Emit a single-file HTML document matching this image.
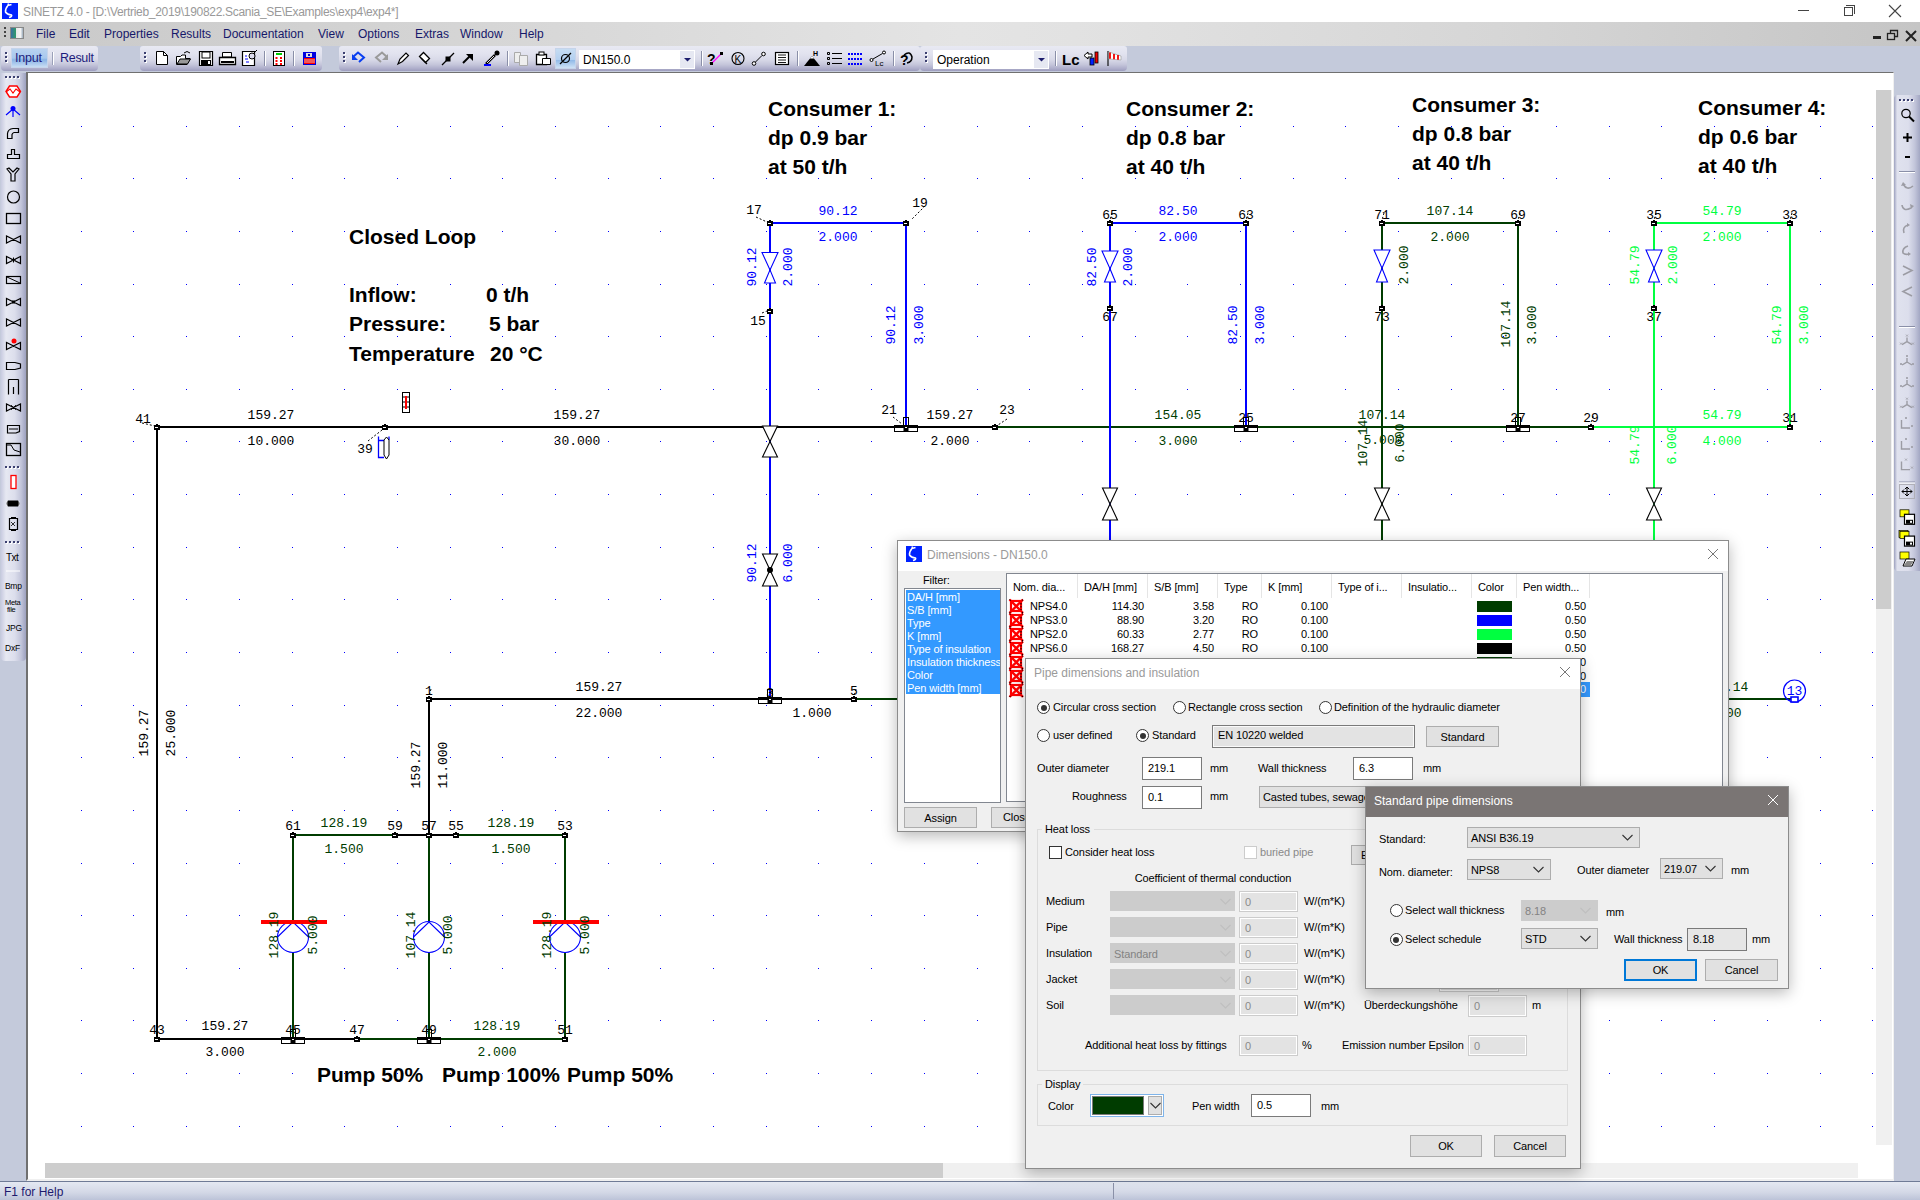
<!DOCTYPE html><html><head><meta charset="utf-8"><title>SINETZ</title><style>
*{box-sizing:border-box}
html,body{margin:0;padding:0}
body{width:1920px;height:1200px;position:relative;overflow:hidden;background:#c4cadb;font-family:"Liberation Sans",sans-serif;font-size:12px;color:#000}
.a{position:absolute}
.t{position:absolute;white-space:nowrap;line-height:1}
.mono{font-family:"Liberation Mono",monospace}

.dlg{position:absolute;background:#f0f0f0;border:1px solid #8c8c8c;box-shadow:0 4px 14px rgba(0,0,0,0.28)}
.ui{position:absolute;white-space:nowrap;font-size:11px;line-height:14px;height:14px;letter-spacing:-0.1px;color:#000}
.ttl{position:absolute;white-space:nowrap;font-size:12px;line-height:16px;height:16px}
.box{position:absolute}
</style></head><body><div class="a" style="left:0;top:0;width:1920px;height:22px;background:#fff"></div><svg class="a" style="left:2px;top:3px" width="16" height="16"><rect width="16" height="16" fill="#0022ff"/><path d="M6.5 0.5L6 2.5L9.5 1.5M6 2.5Q3 6 3.5 9Q5 11.5 9.5 12Q10.5 13.5 7 14.5" stroke="#fff" stroke-width="1.5" fill="none"/></svg><div class="t" style="left:23px;top:6px;font-size:12px;color:#999;letter-spacing:-0.3px">SINETZ 4.0 - [D:\Vertrieb_2019\190822.Scania_SE\Examples\exp4\exp4*]</div><div class="a" style="left:1798px;top:10px;width:11px;height:1px;background:#444"></div><div class="a" style="left:1844px;top:7px;width:9px;height:9px;border:1px solid #444;background:#fff"></div><div class="a" style="left:1846px;top:5px;width:9px;height:9px;border-top:1px solid #444;border-right:1px solid #444"></div><svg class="a" style="left:1888px;top:4px" width="14" height="14"><path d="M1 1L13 13M13 1L1 13" stroke="#444" stroke-width="1.1"/></svg><div class="a" style="left:0;top:22px;width:1920px;height:24px;background:linear-gradient(90deg,#c9c9c9 0%,#d4d4d4 22%,#e4e4e4 50%,#e2e2e2 56%,#d6d6d6 78%,#c5c5c5 100%)"></div><div class="t" style="left:36px;top:28px;font-size:12px;color:#16186a">File</div><div class="t" style="left:69px;top:28px;font-size:12px;color:#16186a">Edit</div><div class="t" style="left:104px;top:28px;font-size:12px;color:#16186a">Properties</div><div class="t" style="left:171px;top:28px;font-size:12px;color:#16186a">Results</div><div class="t" style="left:223px;top:28px;font-size:12px;color:#16186a">Documentation</div><div class="t" style="left:318px;top:28px;font-size:12px;color:#16186a">View</div><div class="t" style="left:358px;top:28px;font-size:12px;color:#16186a">Options</div><div class="t" style="left:415px;top:28px;font-size:12px;color:#16186a">Extras</div><div class="t" style="left:460px;top:28px;font-size:12px;color:#16186a">Window</div><div class="t" style="left:519px;top:28px;font-size:12px;color:#16186a">Help</div><div class="a" style="left:4px;top:27px;width:2px;height:2px;background:#444;box-shadow:0 4px 0 #444,0 8px 0 #444"></div><div class="a" style="left:10px;top:27px;width:14px;height:12px;border:1px solid #888;background:linear-gradient(90deg,#3a6fa0 0%,#2f9a6a 40%,#e8e8e8 45%,#f4f4f4 80%,#9ab 100%)"></div><div class="a" style="left:1873px;top:36px;width:8px;height:3px;background:#222"></div><svg class="a" style="left:1886px;top:29px" width="14" height="12"><rect x="1.5" y="4.5" width="7" height="6" fill="none" stroke="#222" stroke-width="1.3"/><path d="M4.5 4.5V1.5H11.5V7.5H8.5" fill="none" stroke="#222" stroke-width="1.3"/></svg><svg class="a" style="left:1905px;top:30px" width="12" height="12"><path d="M1 1L11 11M11 1L1 11" stroke="#222" stroke-width="2"/></svg><div class="a" style="left:0;top:46px;width:1920px;height:26px;background:#c4cadb"></div><div class="a" style="left:26px;top:72px;width:1868px;height:1109px;background:#fff;border-left:2px solid #707070;border-top:1px solid #707070;border-right:1px solid #f0f0f0;border-bottom:2px solid #f0f0f0"></div><div class="a" style="left:0;top:72px;width:26px;height:1109px;background:#c4cadb"></div><div class="a" style="left:1876px;top:90px;width:16px;height:1055px;background:#f0f0f0"></div><div class="a" style="left:1876px;top:90px;width:15px;height:519px;background:#cdcdcd"></div><div class="a" style="left:45px;top:1163px;width:898px;height:15px;background:#cdcdcd"></div><div class="a" style="left:943px;top:1163px;width:915px;height:15px;background:#f0f0f0"></div><div class="a" style="left:0;top:1181px;width:1920px;height:19px;background:linear-gradient(180deg,#6f7b96 0,#6f7b96 1px,#e4e8f2 1px,#d3d8e6 60%,#bcc3d8 100%)"></div><div class="t" style="left:4px;top:1186px;font-size:12px;color:#1e1a6e">F1 for Help</div><div class="a" style="left:1113px;top:1183px;width:1px;height:16px;background:#8a90a8"></div><div class="a" style="left:1px;top:46px;width:97px;height:25px;background:linear-gradient(180deg,#e8e9f3 0%,#e2e3ef 30%,#d8d9e8 55%,#c4c5da 75%,#aeaecb 90%,#9c9cbd 100%);border-radius:3px 3px 4px 4px"></div><div class="a" style="left:140px;top:46px;width:182px;height:25px;background:linear-gradient(180deg,#e8e9f3 0%,#e2e3ef 30%,#d8d9e8 55%,#c4c5da 75%,#aeaecb 90%,#9c9cbd 100%);border-radius:3px 3px 4px 4px"></div><div class="a" style="left:339px;top:46px;width:581px;height:25px;background:linear-gradient(180deg,#e8e9f3 0%,#e2e3ef 30%,#d8d9e8 55%,#c4c5da 75%,#aeaecb 90%,#9c9cbd 100%);border-radius:3px 3px 4px 4px"></div><div class="a" style="left:920px;top:46px;width:207px;height:25px;background:linear-gradient(180deg,#e8e9f3 0%,#e2e3ef 30%,#d8d9e8 55%,#c4c5da 75%,#aeaecb 90%,#9c9cbd 100%);border-radius:3px 3px 4px 4px"></div><div class="a" style="left:11px;top:48px;width:37px;height:20px;border:1px solid #c6d4ea;background:linear-gradient(180deg,#b8d2f0 0%,#a8c8ee 50%,#8ab4e6 60%,#c8ddf4 100%)"></div><div class="t" style="left:15px;top:52px;font-size:12.5px;color:#1c1c7c;letter-spacing:-0.2px">Input</div><div class="a" style="left:52px;top:52px;width:1px;height:13px;background:#9aa0b8;box-shadow:1px 0 0 #fff"></div><div class="t" style="left:60px;top:52px;font-size:12.5px;color:#1c1c7c;letter-spacing:-0.3px">Result</div><div class="a" style="left:555px;top:48px;width:21px;height:21px;border:1px solid #c6d4ea;background:linear-gradient(180deg,#c6dcf2 0%,#b4d0f0 55%,#92bae8 60%,#cfe2f6 100%)"></div><div class="a" style="left:579px;top:50px;width:116px;height:19px;background:#fff"></div><div class="a" style="left:680px;top:51px;width:14px;height:17px;background:#e6e8f2"></div><div class="t" style="left:583px;top:54px;font-size:12px;color:#000">DN150.0</div><div class="a" style="left:933px;top:50px;width:116px;height:19px;background:#fff"></div><div class="a" style="left:1034px;top:51px;width:14px;height:17px;background:#e6e8f2"></div><div class="t" style="left:937px;top:54px;font-size:12px;color:#000">Operation</div><svg class="a" style="left:0;top:44px" width="1140" height="30" viewBox="0 44 1140 30"><rect x="6" y="53" width="2" height="2" fill="#fff"/><rect x="5" y="52" width="2" height="2" fill="#3c4070"/><rect x="6" y="57" width="2" height="2" fill="#fff"/><rect x="5" y="56" width="2" height="2" fill="#3c4070"/><rect x="6" y="61" width="2" height="2" fill="#fff"/><rect x="5" y="60" width="2" height="2" fill="#3c4070"/><rect x="145" y="53" width="2" height="2" fill="#fff"/><rect x="144" y="52" width="2" height="2" fill="#3c4070"/><rect x="145" y="57" width="2" height="2" fill="#fff"/><rect x="144" y="56" width="2" height="2" fill="#3c4070"/><rect x="145" y="61" width="2" height="2" fill="#fff"/><rect x="144" y="60" width="2" height="2" fill="#3c4070"/><rect x="344" y="53" width="2" height="2" fill="#fff"/><rect x="343" y="52" width="2" height="2" fill="#3c4070"/><rect x="344" y="57" width="2" height="2" fill="#fff"/><rect x="343" y="56" width="2" height="2" fill="#3c4070"/><rect x="344" y="61" width="2" height="2" fill="#fff"/><rect x="343" y="60" width="2" height="2" fill="#3c4070"/><rect x="926" y="53" width="2" height="2" fill="#fff"/><rect x="925" y="52" width="2" height="2" fill="#3c4070"/><rect x="926" y="57" width="2" height="2" fill="#fff"/><rect x="925" y="56" width="2" height="2" fill="#3c4070"/><rect x="926" y="61" width="2" height="2" fill="#fff"/><rect x="925" y="60" width="2" height="2" fill="#3c4070"/><path d="M684 58h7l-3.5 3.5z" fill="#1c1c6c"/><path d="M1038 58h7l-3.5 3.5z" fill="#1c1c6c"/><rect x="264" y="51" width="1" height="15" fill="#8a8fa8"/><rect x="265" y="51" width="1" height="15" fill="#fff"/><rect x="293" y="51" width="1" height="15" fill="#8a8fa8"/><rect x="294" y="51" width="1" height="15" fill="#fff"/><rect x="507" y="51" width="1" height="15" fill="#8a8fa8"/><rect x="508" y="51" width="1" height="15" fill="#fff"/><rect x="701" y="51" width="1" height="15" fill="#8a8fa8"/><rect x="702" y="51" width="1" height="15" fill="#fff"/><rect x="797" y="51" width="1" height="15" fill="#8a8fa8"/><rect x="798" y="51" width="1" height="15" fill="#fff"/><rect x="893" y="51" width="1" height="15" fill="#8a8fa8"/><rect x="894" y="51" width="1" height="15" fill="#fff"/><rect x="1055" y="51" width="1" height="15" fill="#8a8fa8"/><rect x="1056" y="51" width="1" height="15" fill="#fff"/><path d="M156.5 51.5H163.5L167.5 55.5V64.5H156.5Z" fill="#fff" stroke="#000"/><path d="M163.5 51.5V55.5H167.5" fill="none" stroke="#000"/><path d="M176.5 56.5H180.5L182 55H185.5V58.5H190L187 64.5H176.5Z" fill="#fff" stroke="#000"/><path d="M177 64L180 59H190.5L187.5 64Z" fill="#999" stroke="#000"/><path d="M184 53Q187 50 190 53" fill="none" stroke="#000"/><path d="M199.5 51.5H212.5V65.5H199.5Z" fill="#fff" stroke="#000" stroke-width="1.2"/><rect x="202" y="52" width="8" height="6" fill="#fff" stroke="#000"/><rect x="201" y="60" width="10" height="5" fill="#000"/><rect x="208" y="61" width="2" height="3" fill="#fff"/><path d="M222.5 52.5H231.5V57H222.5Z" fill="#fff" stroke="#000"/><path d="M219.5 57.5H235.5V64.5H219.5Z" fill="#fff" stroke="#000" stroke-width="1.3"/><rect x="221" y="61" width="13" height="2" fill="#000"/><path d="M242.5 51.5H254.5V65.5H242.5Z" fill="#fff" stroke="#000" stroke-width="1.2"/><path d="M245 56h2M245 59h3M246 62h3" stroke="#00f"/><circle cx="252" cy="56" r="3" fill="#dde" stroke="#000"/><path d="M254 53l3-3" stroke="#000"/><rect x="273.5" y="51.5" width="11" height="14" fill="#fff" stroke="#000"/><rect x="276" y="53" width="6" height="2" fill="#0c0"/><rect x="275.5" y="57" width="2" height="2" fill="#f00"/><rect x="280" y="57" width="2" height="2" fill="#f00"/><rect x="275.5" y="60" width="2" height="2" fill="#f00"/><rect x="280" y="60" width="2" height="2" fill="#f00"/><rect x="275.5" y="63" width="2" height="2" fill="#f00"/><rect x="280" y="63" width="2" height="2" fill="#f00"/><rect x="303" y="52" width="13" height="13" fill="#0000e0"/><rect x="306" y="53" width="6" height="4" fill="#ddd"/><rect x="308" y="54" width="2" height="2" fill="#00c"/><rect x="304" y="58" width="11" height="6" fill="#f00"/><path d="M304 60h11M304 62h11" stroke="#ddd" stroke-width="0.8"/><path d="M353 57L358 52.5L364 57.5L359 62" fill="none" stroke="#0a3ff0" stroke-width="2"/><path d="M352 54V60H358Z" fill="#0a3ff0"/><path d="M387 57L382 52.5L376 57.5L381 62" fill="none" stroke="#9a9a9a" stroke-width="2"/><path d="M388 54V60H382Z" fill="#9a9a9a"/><path d="M398 64L400 59L406 53L408.5 55.5L402.5 61.5Z" fill="#fff" stroke="#000" stroke-width="1.2"/><path d="M419.5 56.5L423.5 52.5L429.5 58.5L425.5 62.5Z" fill="#fff" stroke="#000" stroke-width="1.3"/><path d="M421 58L427 64" stroke="#000" stroke-width="1.2"/><path d="M442 65L454 53" stroke="#000" stroke-width="1.2"/><rect x="445.5" y="56.5" width="5" height="5" fill="#000"/><path d="M463 63L471 55" stroke="#000" stroke-width="2"/><path d="M466 54H473V61Z" fill="#000"/><path d="M486 64L495 55" stroke="#000" stroke-width="2.5"/><path d="M487 63L494 56" stroke="#fff" stroke-width="0.9"/><circle cx="497" cy="53" r="2.5" fill="#000"/><path d="M484 65H491" stroke="#00f" stroke-width="2"/><path d="M514.5 52.5H520.5V62.5H514.5Z" fill="#eee" stroke="#aaa"/><path d="M519.5 55.5H527.5V65.5H519.5Z" fill="#eee" stroke="#aaa"/><path d="M536.5 54.5H546.5V64.5H536.5Z" fill="#fff" stroke="#000" stroke-width="1.3"/><rect x="539" y="52" width="5" height="3" fill="#fff" stroke="#000"/><path d="M542.5 58.5H550.5V64.5H542.5Z" fill="#fff" stroke="#000"/><circle cx="565.5" cy="58.5" r="4" fill="none" stroke="#000" stroke-width="1.2"/><path d="M560 64L571 53" stroke="#000" stroke-width="1.2"/><text x="707" y="64" font-size="14" font-weight="bold" font-family="Liberation Sans" fill="#000">?</text><path d="M712 63L722 53" stroke="#f0f" stroke-width="1.3"/><rect x="720" y="52" width="3" height="3" fill="#000"/><rect x="710" y="62" width="3" height="3" fill="#000"/><circle cx="738" cy="58.5" r="6" fill="none" stroke="#000" stroke-width="1.1"/><text x="734.5" y="62.5" font-size="10" font-family="Liberation Sans" fill="#000">K</text><circle cx="754" cy="63.5" r="1.8" fill="#fff" stroke="#000"/><circle cx="763.5" cy="54" r="1.8" fill="#fff" stroke="#000"/><path d="M755.5 62L762 55.5" stroke="#000"/><rect x="775.5" y="52.5" width="13" height="12" fill="#fff" stroke="#000" stroke-width="1.2"/><path d="M778 55h8M778 57.5h8M778 60h8M778 62.5h8" stroke="#000" stroke-width="0.9"/><path d="M804 66L812 56L820 66Z" fill="#000"/><path d="M810 58.5L812 56L814 58.5Z" fill="#fff"/><text x="813" y="56" font-size="7" font-weight="bold" font-family="Liberation Sans" fill="#000">H</text><path d="M827.5 52.5h2v2h-2zM827.5 57.5h2v2h-2zM827.5 62.5h2v2h-2z" fill="none" stroke="#000"/><path d="M832 53.5h10M832 58.5h10M832 63.5h10" stroke="#000" stroke-width="1.2"/><rect x="848" y="53" width="2" height="2" fill="#0000ff"/><rect x="851" y="53" width="2" height="2" fill="#0000ff"/><rect x="854" y="53" width="2" height="2" fill="#0000ff"/><rect x="857" y="53" width="2" height="2" fill="#0000ff"/><rect x="860" y="53" width="2" height="2" fill="#0000ff"/><rect x="848" y="58" width="2" height="2" fill="#0000ff"/><rect x="851" y="58" width="2" height="2" fill="#0000ff"/><rect x="854" y="58" width="2" height="2" fill="#0000ff"/><rect x="857" y="58" width="2" height="2" fill="#0000ff"/><rect x="860" y="58" width="2" height="2" fill="#0000ff"/><rect x="848" y="63" width="2" height="2" fill="#0000ff"/><rect x="851" y="63" width="2" height="2" fill="#0000ff"/><rect x="854" y="63" width="2" height="2" fill="#0000ff"/><rect x="857" y="63" width="2" height="2" fill="#0000ff"/><rect x="860" y="63" width="2" height="2" fill="#0000ff"/><circle cx="871.5" cy="60" r="1.5" fill="#fff" stroke="#000"/><circle cx="884" cy="52.5" r="1.5" fill="#fff" stroke="#000"/><path d="M873 59L882.5 53.5" stroke="#000"/><text x="875" y="66" font-size="8" font-family="Liberation Sans" fill="#000">Lc</text><text x="900" y="65" font-size="14" font-weight="bold" font-family="Liberation Sans" fill="#000">?</text><path d="M904 55Q910 50 912 57Q912 62 907 63" fill="none" stroke="#000" stroke-width="1.5"/><text x="1062" y="64.5" font-size="15" font-weight="bold" font-family="Liberation Sans" fill="#000">Lc</text><path d="M1084 55.5L1088 52V54H1092V57H1088V59Z" fill="#fff" stroke="#000"/><rect x="1090" y="58" width="4" height="7" fill="#0020ff" stroke="#000" stroke-width="0.8"/><rect x="1095" y="52" width="3" height="11" fill="#e00" stroke="#000" stroke-width="0.8"/><path d="M1108 51V66" stroke="#000" stroke-width="1.1"/><path d="M1109 52L1121 56V60L1109 59Z" fill="#fff" stroke="#aaa" stroke-width="0.8"/><path d="M1110 52.5V58.8M1114 54V59.3M1118 55V59.7" stroke="#e00" stroke-width="1.8"/></svg><div class="a" style="left:1px;top:73px;width:25px;height:588px;background:linear-gradient(90deg,#c8cbe0 0%,#e6e8f2 20%,#dcdeec 55%,#c2c5da 80%,#9da1bf 100%);border-radius:0 0 4px 4px"></div><svg class="a" style="left:0;top:70px" width="28" height="600" viewBox="0 70 28 600"><rect x="6" y="77" width="2" height="2" fill="#fff"/><rect x="5" y="76" width="2" height="2" fill="#3c4070"/><rect x="6" y="467" width="2" height="2" fill="#fff"/><rect x="5" y="466" width="2" height="2" fill="#3c4070"/><rect x="6" y="542" width="2" height="2" fill="#fff"/><rect x="5" y="541" width="2" height="2" fill="#3c4070"/><rect x="10" y="77" width="2" height="2" fill="#fff"/><rect x="9" y="76" width="2" height="2" fill="#3c4070"/><rect x="10" y="467" width="2" height="2" fill="#fff"/><rect x="9" y="466" width="2" height="2" fill="#3c4070"/><rect x="10" y="542" width="2" height="2" fill="#fff"/><rect x="9" y="541" width="2" height="2" fill="#3c4070"/><rect x="14" y="77" width="2" height="2" fill="#fff"/><rect x="13" y="76" width="2" height="2" fill="#3c4070"/><rect x="14" y="467" width="2" height="2" fill="#fff"/><rect x="13" y="466" width="2" height="2" fill="#3c4070"/><rect x="14" y="542" width="2" height="2" fill="#fff"/><rect x="13" y="541" width="2" height="2" fill="#3c4070"/><rect x="18" y="77" width="2" height="2" fill="#fff"/><rect x="17" y="76" width="2" height="2" fill="#3c4070"/><rect x="18" y="467" width="2" height="2" fill="#fff"/><rect x="17" y="466" width="2" height="2" fill="#3c4070"/><rect x="18" y="542" width="2" height="2" fill="#fff"/><rect x="17" y="541" width="2" height="2" fill="#3c4070"/><path d="M6 91.5L9.5 86H17L20.5 91.5L17 97H9.5Z" fill="#fff" stroke="#f00" stroke-width="1.4"/><path d="M6 92L10 89L13 93L16 89L20 92" fill="none" stroke="#f00" stroke-width="1.1"/><circle cx="13" cy="108.5" r="2.5" fill="#0000ff"/><path d="M13 109V117M13 109L6 115M13 109L20 115" stroke="#0000ff" stroke-width="1.2"/><path d="M7.5 138.5V133.5Q8 129 13 128.5H18.5V132.5H14Q12.5 133 12 134.5V138.5Z" fill="none" stroke="#000" stroke-width="1.2"/><path d="M7.5 158.5V154.5H11.5V149.5H14.5V154.5H19.5V158.5Z" fill="none" stroke="#000" stroke-width="1.2"/><path d="M11 181V174L7 169L9 168L13 172L17 168L19 169L15 174V181Z" fill="none" stroke="#000" stroke-width="1.2"/><circle cx="13.5" cy="197" r="6" fill="none" stroke="#000" stroke-width="1.2"/><rect x="6.5" y="213.5" width="14" height="10" fill="none" stroke="#000" stroke-width="1.3"/><path d="M6.5 236.0V243.0L13.5 239.5ZM20.5 236.0V243.0L13.5 239.5Z" fill="none" stroke="#000" stroke-width="1.2"/><path d="M6.5 256.5V263.5L13.5 260ZM20.5 256.5V263.5L13.5 260Z" fill="none" stroke="#000" stroke-width="1.2"/><path d="M11 260h5M13.5 257.5v5" stroke="#000"/><rect x="6.5" y="276.5" width="14" height="7" fill="none" stroke="#000" stroke-width="1.2"/><path d="M7 277L20 283" stroke="#000"/><path d="M6.5 298.5V305.5L13.5 302ZM20.5 298.5V305.5L13.5 302Z" fill="none" stroke="#000" stroke-width="1.2"/><rect x="12" y="300.5" width="3" height="3" fill="#000"/><path d="M6.5 319.0V326.0L13.5 322.5ZM20.5 319.0V326.0L13.5 322.5Z" fill="none" stroke="#000" stroke-width="1.2"/><path d="M6.5 342.5V349.5L13.5 346ZM20.5 342.5V349.5L13.5 346Z" fill="none" stroke="#000" stroke-width="1.2"/><circle cx="14" cy="341" r="2.5" fill="#f00"/><path d="M6.5 362.5H15L20.5 364V368L15 369.5H6.5Z" fill="none" stroke="#000" stroke-width="1.2"/><path d="M8.5 379.5V394.5M18.5 379.5V394.5M8.5 379.5H18.5M13.5 387V394" fill="none" stroke="#000" stroke-width="1.2"/><path d="M6.5 404.0V411.0L13.5 407.5ZM20.5 404.0V411.0L13.5 407.5Z" fill="none" stroke="#000" stroke-width="1.2"/><path d="M11 405l5 5M16 405l-5 5" stroke="#000" stroke-width="0.8"/><path d="M7.5 425.5H19.5V431.5L16 433H7.5Z" fill="none" stroke="#000" stroke-width="1.2"/><path d="M9 429h9" stroke="#000"/><rect x="6.5" y="443.5" width="14" height="12" fill="none" stroke="#000" stroke-width="1.3"/><path d="M7 445L11 445L14 450L20 452" fill="none" stroke="#000"/><rect x="11" y="475.5" width="5" height="13" fill="#fff" stroke="#f00" stroke-width="1.3"/><path d="M8 500.5H18Q21 503.5 18 506.5H8Q5 503.5 8 500.5Z" fill="#000"/><path d="M7 501V506M19 501V506" stroke="#fff" stroke-width="0.6"/><path d="M9.5 518.5H17.5V529.5H9.5Z" fill="none" stroke="#000" stroke-width="1.2"/><path d="M11 522L15 526M15 522L11 526" stroke="#000" stroke-width="0.8"/><path d="M11 517.5H16M11 530.5H16" stroke="#000"/><text x="6" y="560.5" font-size="10" font-family="Liberation Sans" fill="#000" letter-spacing="-0.5">Txt</text><path d="M6 571h14" stroke="#fff" stroke-width="1"/><text x="5" y="589" font-size="8.5" font-family="Liberation Sans" fill="#000" letter-spacing="-0.3">Bmp</text><text x="5" y="605" font-size="7.5" font-family="Liberation Sans" fill="#000" letter-spacing="-0.3">Meta</text><text x="7" y="611.5" font-size="7.5" font-family="Liberation Sans" fill="#000" letter-spacing="-0.3">file</text><text x="6" y="631" font-size="8.5" font-family="Liberation Sans" fill="#000" letter-spacing="-0.2">JPG</text><text x="5" y="651" font-size="8.5" font-family="Liberation Sans" fill="#000" letter-spacing="-0.2">DxF</text></svg><div class="a" style="left:1894px;top:95px;width:26px;height:476px;background:linear-gradient(90deg,#9da1bf 0%,#e0e2ee 12%,#dcdeec 55%,#c2c5da 80%,#a3a7c3 100%);border-radius:4px 0 0 4px"></div><svg class="a" style="left:1890px;top:90px" width="30" height="480" viewBox="1890 90 30 480"><rect x="1900" y="100" width="2" height="2" fill="#fff"/><rect x="1899" y="99" width="2" height="2" fill="#3c4070"/><rect x="1904" y="100" width="2" height="2" fill="#fff"/><rect x="1903" y="99" width="2" height="2" fill="#3c4070"/><rect x="1908" y="100" width="2" height="2" fill="#fff"/><rect x="1907" y="99" width="2" height="2" fill="#3c4070"/><rect x="1912" y="100" width="2" height="2" fill="#fff"/><rect x="1911" y="99" width="2" height="2" fill="#3c4070"/><circle cx="1906" cy="113.5" r="4.2" fill="#dde" stroke="#000" stroke-width="1.2"/><path d="M1909 116.5L1914 121.5" stroke="#000" stroke-width="2"/><path d="M1903 137.5h9M1907.5 133v9" stroke="#000" stroke-width="2"/><path d="M1905 157h5" stroke="#000" stroke-width="2"/><path d="M1899 171.5h16" stroke="#8a8fa8"/><path d="M1899 172.5h16" stroke="#fff"/><path d="M1899 326.5h16" stroke="#8a8fa8"/><path d="M1899 327.5h16" stroke="#fff"/><path d="M1899 482h16" stroke="#8a8fa8"/><path d="M1899 483h16" stroke="#fff"/><path d="M1903 184Q1907 191 1913 186" fill="none" stroke="#9c9ca4" stroke-width="1.6"/><path d="M1901 186l2-4 3 3z" fill="#9c9ca4"/><path d="M1902 205Q1903 212 1911 208" fill="none" stroke="#9c9ca4" stroke-width="1.6"/><path d="M1910 204l4 2-3 3z" fill="#9c9ca4"/><path d="M1908 225Q1902 227 1904 233" fill="none" stroke="#9c9ca4" stroke-width="1.6"/><path d="M1907 223l3 2-3 2z" fill="#9c9ca4"/><path d="M1908 246Q1902 248 1903 253Q1905 255 1909 254" fill="none" stroke="#9c9ca4" stroke-width="1.6"/><path d="M1908 252l3 2-3 2z" fill="#9c9ca4"/><path d="M1903 266L1912 270.5L1903 275" fill="none" stroke="#9c9ca4" stroke-width="1.6"/><path d="M1912 287L1903 291.5L1912 296" fill="none" stroke="#9c9ca4" stroke-width="1.6"/><path d="M1907 337.6V341.6L1902 344.6M1907 341.6L1912 344.6" fill="none" stroke="#9c9ca4" stroke-width="1.4"/><path d="M1906 334.6l2 2M1908 334.6l-2 2M1900 342.6l2 2M1902 342.6l-2 2M1912 342.6l2 2M1914 342.6l-2 2" stroke="#9c9ca4" stroke-width="0.8"/><path d="M1907 358V362L1902 365M1907 362L1912 365" fill="none" stroke="#9c9ca4" stroke-width="1.4"/><path d="M1906 355l2 2M1908 355l-2 2M1900 363l2 2M1902 363l-2 2M1912 363l2 2M1914 363l-2 2" stroke="#9c9ca4" stroke-width="0.8"/><path d="M1907 380V384L1902 387M1907 384L1912 387" fill="none" stroke="#9c9ca4" stroke-width="1.4"/><path d="M1906 377l2 2M1908 377l-2 2M1900 385l2 2M1902 385l-2 2M1912 385l2 2M1914 385l-2 2" stroke="#9c9ca4" stroke-width="0.8"/><path d="M1907 400.7V404.7L1902 407.7M1907 404.7L1912 407.7" fill="none" stroke="#9c9ca4" stroke-width="1.4"/><path d="M1906 397.7l2 2M1908 397.7l-2 2M1900 405.7l2 2M1902 405.7l-2 2M1912 405.7l2 2M1914 405.7l-2 2" stroke="#9c9ca4" stroke-width="0.8"/><path d="M1901.5 420V428H1910" fill="none" stroke="#9c9ca4" stroke-width="1.4"/><path d="M1905 417l2 2M1907 417l-2 2M1911 425l2 2M1913 425l-2 2" stroke="#9c9ca4" stroke-width="0.8"/><path d="M1901.5 441V449H1910" fill="none" stroke="#9c9ca4" stroke-width="1.4"/><path d="M1905 438l2 2M1907 438l-2 2M1911 446l2 2M1913 446l-2 2" stroke="#9c9ca4" stroke-width="0.8"/><path d="M1901.5 461.6V469.6H1910" fill="none" stroke="#9c9ca4" stroke-width="1.4"/><path d="M1905 458.6l2 2M1907 458.6l-2 2M1911 466.6l2 2M1913 466.6l-2 2" stroke="#9c9ca4" stroke-width="0.8"/><rect x="1899.5" y="484.5" width="15" height="14" fill="none" stroke="#b0b0b8"/><path d="M1907 487V496M1902 491.5H1912" stroke="#000" stroke-width="1"/><path d="M1905 489l2-2 2 2M1905 494l2 2 2-2M1904 489.5l-2 2 2 2M1910 489.5l2 2-2 2" fill="none" stroke="#000" stroke-width="1"/><rect x="1900" y="509.79999999999995" width="9" height="7" fill="#ff0" stroke="#000" stroke-width="0.7"/><rect x="1904.5" y="514.3" width="10" height="10" fill="#fff" stroke="#000" stroke-width="1.2"/><rect x="1906" y="519.8" width="7" height="4" fill="#000"/><rect x="1910" y="520.8" width="2" height="2" fill="#fff"/><rect x="1899" y="530.6" width="9" height="7" fill="#ff0" stroke="#000" stroke-width="0.7"/><rect x="1900" y="531.6" width="9" height="7" fill="#ff0" stroke="#000" stroke-width="0.7"/><rect x="1904.5" y="536.1" width="10" height="10" fill="#fff" stroke="#000" stroke-width="1.2"/><rect x="1906" y="541.6" width="7" height="4" fill="#000"/><rect x="1910" y="542.6" width="2" height="2" fill="#fff"/><rect x="1900" y="552" width="9" height="7" fill="#ff0" stroke="#000" stroke-width="0.7"/><path d="M1903 566L1906 559H1915L1912 566Z" fill="#fff" stroke="#000" stroke-width="1"/><path d="M1904 565L1907 561H1914L1911 565Z" fill="#888"/></svg><svg class="a" style="left:0;top:0" width="1920" height="1200" viewBox="0 0 1920 1200"><defs><clipPath id="cv"><rect x="28" y="73" width="1848" height="1090"/></clipPath></defs><g clip-path="url(#cv)"><path d="M81 126h1v1h-1zM133 126h1v1h-1zM186 126h1v1h-1zM239 126h1v1h-1zM292 126h1v1h-1zM344 126h1v1h-1zM397 126h1v1h-1zM450 126h1v1h-1zM502 126h1v1h-1zM555 126h1v1h-1zM608 126h1v1h-1zM660 126h1v1h-1zM713 126h1v1h-1zM766 126h1v1h-1zM818 126h1v1h-1zM871 126h1v1h-1zM924 126h1v1h-1zM977 126h1v1h-1zM1029 126h1v1h-1zM1082 126h1v1h-1zM1135 126h1v1h-1zM1187 126h1v1h-1zM1240 126h1v1h-1zM1293 126h1v1h-1zM1345 126h1v1h-1zM1398 126h1v1h-1zM1451 126h1v1h-1zM1503 126h1v1h-1zM1556 126h1v1h-1zM1609 126h1v1h-1zM1661 126h1v1h-1zM1714 126h1v1h-1zM1767 126h1v1h-1zM1820 126h1v1h-1zM1872 126h1v1h-1zM81 178h1v1h-1zM133 178h1v1h-1zM186 178h1v1h-1zM239 178h1v1h-1zM292 178h1v1h-1zM344 178h1v1h-1zM397 178h1v1h-1zM450 178h1v1h-1zM502 178h1v1h-1zM555 178h1v1h-1zM608 178h1v1h-1zM660 178h1v1h-1zM713 178h1v1h-1zM766 178h1v1h-1zM818 178h1v1h-1zM871 178h1v1h-1zM924 178h1v1h-1zM977 178h1v1h-1zM1029 178h1v1h-1zM1082 178h1v1h-1zM1135 178h1v1h-1zM1187 178h1v1h-1zM1240 178h1v1h-1zM1293 178h1v1h-1zM1345 178h1v1h-1zM1398 178h1v1h-1zM1451 178h1v1h-1zM1503 178h1v1h-1zM1556 178h1v1h-1zM1609 178h1v1h-1zM1661 178h1v1h-1zM1714 178h1v1h-1zM1767 178h1v1h-1zM1820 178h1v1h-1zM1872 178h1v1h-1zM81 231h1v1h-1zM133 231h1v1h-1zM186 231h1v1h-1zM239 231h1v1h-1zM292 231h1v1h-1zM344 231h1v1h-1zM397 231h1v1h-1zM450 231h1v1h-1zM502 231h1v1h-1zM555 231h1v1h-1zM608 231h1v1h-1zM660 231h1v1h-1zM713 231h1v1h-1zM766 231h1v1h-1zM818 231h1v1h-1zM871 231h1v1h-1zM924 231h1v1h-1zM977 231h1v1h-1zM1029 231h1v1h-1zM1082 231h1v1h-1zM1135 231h1v1h-1zM1187 231h1v1h-1zM1240 231h1v1h-1zM1293 231h1v1h-1zM1345 231h1v1h-1zM1398 231h1v1h-1zM1451 231h1v1h-1zM1503 231h1v1h-1zM1556 231h1v1h-1zM1609 231h1v1h-1zM1661 231h1v1h-1zM1714 231h1v1h-1zM1767 231h1v1h-1zM1820 231h1v1h-1zM1872 231h1v1h-1zM81 284h1v1h-1zM133 284h1v1h-1zM186 284h1v1h-1zM239 284h1v1h-1zM292 284h1v1h-1zM344 284h1v1h-1zM397 284h1v1h-1zM450 284h1v1h-1zM502 284h1v1h-1zM555 284h1v1h-1zM608 284h1v1h-1zM660 284h1v1h-1zM713 284h1v1h-1zM766 284h1v1h-1zM818 284h1v1h-1zM871 284h1v1h-1zM924 284h1v1h-1zM977 284h1v1h-1zM1029 284h1v1h-1zM1082 284h1v1h-1zM1135 284h1v1h-1zM1187 284h1v1h-1zM1240 284h1v1h-1zM1293 284h1v1h-1zM1345 284h1v1h-1zM1398 284h1v1h-1zM1451 284h1v1h-1zM1503 284h1v1h-1zM1556 284h1v1h-1zM1609 284h1v1h-1zM1661 284h1v1h-1zM1714 284h1v1h-1zM1767 284h1v1h-1zM1820 284h1v1h-1zM1872 284h1v1h-1zM81 336h1v1h-1zM133 336h1v1h-1zM186 336h1v1h-1zM239 336h1v1h-1zM292 336h1v1h-1zM344 336h1v1h-1zM397 336h1v1h-1zM450 336h1v1h-1zM502 336h1v1h-1zM555 336h1v1h-1zM608 336h1v1h-1zM660 336h1v1h-1zM713 336h1v1h-1zM766 336h1v1h-1zM818 336h1v1h-1zM871 336h1v1h-1zM924 336h1v1h-1zM977 336h1v1h-1zM1029 336h1v1h-1zM1082 336h1v1h-1zM1135 336h1v1h-1zM1187 336h1v1h-1zM1240 336h1v1h-1zM1293 336h1v1h-1zM1345 336h1v1h-1zM1398 336h1v1h-1zM1451 336h1v1h-1zM1503 336h1v1h-1zM1556 336h1v1h-1zM1609 336h1v1h-1zM1661 336h1v1h-1zM1714 336h1v1h-1zM1767 336h1v1h-1zM1820 336h1v1h-1zM1872 336h1v1h-1zM81 389h1v1h-1zM133 389h1v1h-1zM186 389h1v1h-1zM239 389h1v1h-1zM292 389h1v1h-1zM344 389h1v1h-1zM397 389h1v1h-1zM450 389h1v1h-1zM502 389h1v1h-1zM555 389h1v1h-1zM608 389h1v1h-1zM660 389h1v1h-1zM713 389h1v1h-1zM766 389h1v1h-1zM818 389h1v1h-1zM871 389h1v1h-1zM924 389h1v1h-1zM977 389h1v1h-1zM1029 389h1v1h-1zM1082 389h1v1h-1zM1135 389h1v1h-1zM1187 389h1v1h-1zM1240 389h1v1h-1zM1293 389h1v1h-1zM1345 389h1v1h-1zM1398 389h1v1h-1zM1451 389h1v1h-1zM1503 389h1v1h-1zM1556 389h1v1h-1zM1609 389h1v1h-1zM1661 389h1v1h-1zM1714 389h1v1h-1zM1767 389h1v1h-1zM1820 389h1v1h-1zM1872 389h1v1h-1zM81 441h1v1h-1zM133 441h1v1h-1zM186 441h1v1h-1zM239 441h1v1h-1zM292 441h1v1h-1zM344 441h1v1h-1zM397 441h1v1h-1zM450 441h1v1h-1zM502 441h1v1h-1zM555 441h1v1h-1zM608 441h1v1h-1zM660 441h1v1h-1zM713 441h1v1h-1zM766 441h1v1h-1zM818 441h1v1h-1zM871 441h1v1h-1zM924 441h1v1h-1zM977 441h1v1h-1zM1029 441h1v1h-1zM1082 441h1v1h-1zM1135 441h1v1h-1zM1187 441h1v1h-1zM1240 441h1v1h-1zM1293 441h1v1h-1zM1345 441h1v1h-1zM1398 441h1v1h-1zM1451 441h1v1h-1zM1503 441h1v1h-1zM1556 441h1v1h-1zM1609 441h1v1h-1zM1661 441h1v1h-1zM1714 441h1v1h-1zM1767 441h1v1h-1zM1820 441h1v1h-1zM1872 441h1v1h-1zM81 494h1v1h-1zM133 494h1v1h-1zM186 494h1v1h-1zM239 494h1v1h-1zM292 494h1v1h-1zM344 494h1v1h-1zM397 494h1v1h-1zM450 494h1v1h-1zM502 494h1v1h-1zM555 494h1v1h-1zM608 494h1v1h-1zM660 494h1v1h-1zM713 494h1v1h-1zM766 494h1v1h-1zM818 494h1v1h-1zM871 494h1v1h-1zM924 494h1v1h-1zM977 494h1v1h-1zM1029 494h1v1h-1zM1082 494h1v1h-1zM1135 494h1v1h-1zM1187 494h1v1h-1zM1240 494h1v1h-1zM1293 494h1v1h-1zM1345 494h1v1h-1zM1398 494h1v1h-1zM1451 494h1v1h-1zM1503 494h1v1h-1zM1556 494h1v1h-1zM1609 494h1v1h-1zM1661 494h1v1h-1zM1714 494h1v1h-1zM1767 494h1v1h-1zM1820 494h1v1h-1zM1872 494h1v1h-1zM81 547h1v1h-1zM133 547h1v1h-1zM186 547h1v1h-1zM239 547h1v1h-1zM292 547h1v1h-1zM344 547h1v1h-1zM397 547h1v1h-1zM450 547h1v1h-1zM502 547h1v1h-1zM555 547h1v1h-1zM608 547h1v1h-1zM660 547h1v1h-1zM713 547h1v1h-1zM766 547h1v1h-1zM818 547h1v1h-1zM871 547h1v1h-1zM924 547h1v1h-1zM977 547h1v1h-1zM1029 547h1v1h-1zM1082 547h1v1h-1zM1135 547h1v1h-1zM1187 547h1v1h-1zM1240 547h1v1h-1zM1293 547h1v1h-1zM1345 547h1v1h-1zM1398 547h1v1h-1zM1451 547h1v1h-1zM1503 547h1v1h-1zM1556 547h1v1h-1zM1609 547h1v1h-1zM1661 547h1v1h-1zM1714 547h1v1h-1zM1767 547h1v1h-1zM1820 547h1v1h-1zM1872 547h1v1h-1zM81 599h1v1h-1zM133 599h1v1h-1zM186 599h1v1h-1zM239 599h1v1h-1zM292 599h1v1h-1zM344 599h1v1h-1zM397 599h1v1h-1zM450 599h1v1h-1zM502 599h1v1h-1zM555 599h1v1h-1zM608 599h1v1h-1zM660 599h1v1h-1zM713 599h1v1h-1zM766 599h1v1h-1zM818 599h1v1h-1zM871 599h1v1h-1zM924 599h1v1h-1zM977 599h1v1h-1zM1029 599h1v1h-1zM1082 599h1v1h-1zM1135 599h1v1h-1zM1187 599h1v1h-1zM1240 599h1v1h-1zM1293 599h1v1h-1zM1345 599h1v1h-1zM1398 599h1v1h-1zM1451 599h1v1h-1zM1503 599h1v1h-1zM1556 599h1v1h-1zM1609 599h1v1h-1zM1661 599h1v1h-1zM1714 599h1v1h-1zM1767 599h1v1h-1zM1820 599h1v1h-1zM1872 599h1v1h-1zM81 652h1v1h-1zM133 652h1v1h-1zM186 652h1v1h-1zM239 652h1v1h-1zM292 652h1v1h-1zM344 652h1v1h-1zM397 652h1v1h-1zM450 652h1v1h-1zM502 652h1v1h-1zM555 652h1v1h-1zM608 652h1v1h-1zM660 652h1v1h-1zM713 652h1v1h-1zM766 652h1v1h-1zM818 652h1v1h-1zM871 652h1v1h-1zM924 652h1v1h-1zM977 652h1v1h-1zM1029 652h1v1h-1zM1082 652h1v1h-1zM1135 652h1v1h-1zM1187 652h1v1h-1zM1240 652h1v1h-1zM1293 652h1v1h-1zM1345 652h1v1h-1zM1398 652h1v1h-1zM1451 652h1v1h-1zM1503 652h1v1h-1zM1556 652h1v1h-1zM1609 652h1v1h-1zM1661 652h1v1h-1zM1714 652h1v1h-1zM1767 652h1v1h-1zM1820 652h1v1h-1zM1872 652h1v1h-1zM81 705h1v1h-1zM133 705h1v1h-1zM186 705h1v1h-1zM239 705h1v1h-1zM292 705h1v1h-1zM344 705h1v1h-1zM397 705h1v1h-1zM450 705h1v1h-1zM502 705h1v1h-1zM555 705h1v1h-1zM608 705h1v1h-1zM660 705h1v1h-1zM713 705h1v1h-1zM766 705h1v1h-1zM818 705h1v1h-1zM871 705h1v1h-1zM924 705h1v1h-1zM977 705h1v1h-1zM1029 705h1v1h-1zM1082 705h1v1h-1zM1135 705h1v1h-1zM1187 705h1v1h-1zM1240 705h1v1h-1zM1293 705h1v1h-1zM1345 705h1v1h-1zM1398 705h1v1h-1zM1451 705h1v1h-1zM1503 705h1v1h-1zM1556 705h1v1h-1zM1609 705h1v1h-1zM1661 705h1v1h-1zM1714 705h1v1h-1zM1767 705h1v1h-1zM1820 705h1v1h-1zM1872 705h1v1h-1zM81 757h1v1h-1zM133 757h1v1h-1zM186 757h1v1h-1zM239 757h1v1h-1zM292 757h1v1h-1zM344 757h1v1h-1zM397 757h1v1h-1zM450 757h1v1h-1zM502 757h1v1h-1zM555 757h1v1h-1zM608 757h1v1h-1zM660 757h1v1h-1zM713 757h1v1h-1zM766 757h1v1h-1zM818 757h1v1h-1zM871 757h1v1h-1zM924 757h1v1h-1zM977 757h1v1h-1zM1029 757h1v1h-1zM1082 757h1v1h-1zM1135 757h1v1h-1zM1187 757h1v1h-1zM1240 757h1v1h-1zM1293 757h1v1h-1zM1345 757h1v1h-1zM1398 757h1v1h-1zM1451 757h1v1h-1zM1503 757h1v1h-1zM1556 757h1v1h-1zM1609 757h1v1h-1zM1661 757h1v1h-1zM1714 757h1v1h-1zM1767 757h1v1h-1zM1820 757h1v1h-1zM1872 757h1v1h-1zM81 810h1v1h-1zM133 810h1v1h-1zM186 810h1v1h-1zM239 810h1v1h-1zM292 810h1v1h-1zM344 810h1v1h-1zM397 810h1v1h-1zM450 810h1v1h-1zM502 810h1v1h-1zM555 810h1v1h-1zM608 810h1v1h-1zM660 810h1v1h-1zM713 810h1v1h-1zM766 810h1v1h-1zM818 810h1v1h-1zM871 810h1v1h-1zM924 810h1v1h-1zM977 810h1v1h-1zM1029 810h1v1h-1zM1082 810h1v1h-1zM1135 810h1v1h-1zM1187 810h1v1h-1zM1240 810h1v1h-1zM1293 810h1v1h-1zM1345 810h1v1h-1zM1398 810h1v1h-1zM1451 810h1v1h-1zM1503 810h1v1h-1zM1556 810h1v1h-1zM1609 810h1v1h-1zM1661 810h1v1h-1zM1714 810h1v1h-1zM1767 810h1v1h-1zM1820 810h1v1h-1zM1872 810h1v1h-1zM81 863h1v1h-1zM133 863h1v1h-1zM186 863h1v1h-1zM239 863h1v1h-1zM292 863h1v1h-1zM344 863h1v1h-1zM397 863h1v1h-1zM450 863h1v1h-1zM502 863h1v1h-1zM555 863h1v1h-1zM608 863h1v1h-1zM660 863h1v1h-1zM713 863h1v1h-1zM766 863h1v1h-1zM818 863h1v1h-1zM871 863h1v1h-1zM924 863h1v1h-1zM977 863h1v1h-1zM1029 863h1v1h-1zM1082 863h1v1h-1zM1135 863h1v1h-1zM1187 863h1v1h-1zM1240 863h1v1h-1zM1293 863h1v1h-1zM1345 863h1v1h-1zM1398 863h1v1h-1zM1451 863h1v1h-1zM1503 863h1v1h-1zM1556 863h1v1h-1zM1609 863h1v1h-1zM1661 863h1v1h-1zM1714 863h1v1h-1zM1767 863h1v1h-1zM1820 863h1v1h-1zM1872 863h1v1h-1zM81 915h1v1h-1zM133 915h1v1h-1zM186 915h1v1h-1zM239 915h1v1h-1zM292 915h1v1h-1zM344 915h1v1h-1zM397 915h1v1h-1zM450 915h1v1h-1zM502 915h1v1h-1zM555 915h1v1h-1zM608 915h1v1h-1zM660 915h1v1h-1zM713 915h1v1h-1zM766 915h1v1h-1zM818 915h1v1h-1zM871 915h1v1h-1zM924 915h1v1h-1zM977 915h1v1h-1zM1029 915h1v1h-1zM1082 915h1v1h-1zM1135 915h1v1h-1zM1187 915h1v1h-1zM1240 915h1v1h-1zM1293 915h1v1h-1zM1345 915h1v1h-1zM1398 915h1v1h-1zM1451 915h1v1h-1zM1503 915h1v1h-1zM1556 915h1v1h-1zM1609 915h1v1h-1zM1661 915h1v1h-1zM1714 915h1v1h-1zM1767 915h1v1h-1zM1820 915h1v1h-1zM1872 915h1v1h-1zM81 968h1v1h-1zM133 968h1v1h-1zM186 968h1v1h-1zM239 968h1v1h-1zM292 968h1v1h-1zM344 968h1v1h-1zM397 968h1v1h-1zM450 968h1v1h-1zM502 968h1v1h-1zM555 968h1v1h-1zM608 968h1v1h-1zM660 968h1v1h-1zM713 968h1v1h-1zM766 968h1v1h-1zM818 968h1v1h-1zM871 968h1v1h-1zM924 968h1v1h-1zM977 968h1v1h-1zM1029 968h1v1h-1zM1082 968h1v1h-1zM1135 968h1v1h-1zM1187 968h1v1h-1zM1240 968h1v1h-1zM1293 968h1v1h-1zM1345 968h1v1h-1zM1398 968h1v1h-1zM1451 968h1v1h-1zM1503 968h1v1h-1zM1556 968h1v1h-1zM1609 968h1v1h-1zM1661 968h1v1h-1zM1714 968h1v1h-1zM1767 968h1v1h-1zM1820 968h1v1h-1zM1872 968h1v1h-1zM81 1020h1v1h-1zM133 1020h1v1h-1zM186 1020h1v1h-1zM239 1020h1v1h-1zM292 1020h1v1h-1zM344 1020h1v1h-1zM397 1020h1v1h-1zM450 1020h1v1h-1zM502 1020h1v1h-1zM555 1020h1v1h-1zM608 1020h1v1h-1zM660 1020h1v1h-1zM713 1020h1v1h-1zM766 1020h1v1h-1zM818 1020h1v1h-1zM871 1020h1v1h-1zM924 1020h1v1h-1zM977 1020h1v1h-1zM1029 1020h1v1h-1zM1082 1020h1v1h-1zM1135 1020h1v1h-1zM1187 1020h1v1h-1zM1240 1020h1v1h-1zM1293 1020h1v1h-1zM1345 1020h1v1h-1zM1398 1020h1v1h-1zM1451 1020h1v1h-1zM1503 1020h1v1h-1zM1556 1020h1v1h-1zM1609 1020h1v1h-1zM1661 1020h1v1h-1zM1714 1020h1v1h-1zM1767 1020h1v1h-1zM1820 1020h1v1h-1zM1872 1020h1v1h-1zM81 1073h1v1h-1zM133 1073h1v1h-1zM186 1073h1v1h-1zM239 1073h1v1h-1zM292 1073h1v1h-1zM344 1073h1v1h-1zM397 1073h1v1h-1zM450 1073h1v1h-1zM502 1073h1v1h-1zM555 1073h1v1h-1zM608 1073h1v1h-1zM660 1073h1v1h-1zM713 1073h1v1h-1zM766 1073h1v1h-1zM818 1073h1v1h-1zM871 1073h1v1h-1zM924 1073h1v1h-1zM977 1073h1v1h-1zM1029 1073h1v1h-1zM1082 1073h1v1h-1zM1135 1073h1v1h-1zM1187 1073h1v1h-1zM1240 1073h1v1h-1zM1293 1073h1v1h-1zM1345 1073h1v1h-1zM1398 1073h1v1h-1zM1451 1073h1v1h-1zM1503 1073h1v1h-1zM1556 1073h1v1h-1zM1609 1073h1v1h-1zM1661 1073h1v1h-1zM1714 1073h1v1h-1zM1767 1073h1v1h-1zM1820 1073h1v1h-1zM1872 1073h1v1h-1zM81 1126h1v1h-1zM133 1126h1v1h-1zM186 1126h1v1h-1zM239 1126h1v1h-1zM292 1126h1v1h-1zM344 1126h1v1h-1zM397 1126h1v1h-1zM450 1126h1v1h-1zM502 1126h1v1h-1zM555 1126h1v1h-1zM608 1126h1v1h-1zM660 1126h1v1h-1zM713 1126h1v1h-1zM766 1126h1v1h-1zM818 1126h1v1h-1zM871 1126h1v1h-1zM924 1126h1v1h-1zM977 1126h1v1h-1zM1029 1126h1v1h-1zM1082 1126h1v1h-1zM1135 1126h1v1h-1zM1187 1126h1v1h-1zM1240 1126h1v1h-1zM1293 1126h1v1h-1zM1345 1126h1v1h-1zM1398 1126h1v1h-1zM1451 1126h1v1h-1zM1503 1126h1v1h-1zM1556 1126h1v1h-1zM1609 1126h1v1h-1zM1661 1126h1v1h-1zM1714 1126h1v1h-1zM1767 1126h1v1h-1zM1820 1126h1v1h-1zM1872 1126h1v1h-1z" fill="#0000ff"/><g shape-rendering="crispEdges"><line x1="157" y1="427" x2="995" y2="427" stroke="#000" stroke-width="2"/><line x1="995" y1="427" x2="1591" y2="427" stroke="#003c00" stroke-width="2"/><line x1="1591" y1="427" x2="1790" y2="427" stroke="#00ff40" stroke-width="2"/><line x1="157" y1="427" x2="157" y2="1039" stroke="#000" stroke-width="2"/><line x1="157" y1="1039" x2="357" y2="1039" stroke="#000" stroke-width="2"/><line x1="357" y1="1039" x2="565" y2="1039" stroke="#003c00" stroke-width="2"/><line x1="293" y1="835" x2="293" y2="1039" stroke="#003c00" stroke-width="2"/><line x1="429" y1="835" x2="429" y2="1039" stroke="#003c00" stroke-width="2"/><line x1="565" y1="835" x2="565" y2="1039" stroke="#003c00" stroke-width="2"/><line x1="293" y1="835" x2="395" y2="835" stroke="#003c00" stroke-width="2"/><line x1="395" y1="835" x2="456" y2="835" stroke="#000" stroke-width="2"/><line x1="456" y1="835" x2="565" y2="835" stroke="#003c00" stroke-width="2"/><line x1="429" y1="699" x2="429" y2="835" stroke="#000" stroke-width="2"/><line x1="429" y1="699" x2="854" y2="699" stroke="#000" stroke-width="2"/><line x1="854" y1="699" x2="900" y2="699" stroke="#003c00" stroke-width="2"/><line x1="1720" y1="699" x2="1794" y2="699" stroke="#003c00" stroke-width="2"/><line x1="770" y1="223" x2="906" y2="223" stroke="#0000ff" stroke-width="2"/><line x1="770" y1="223" x2="770" y2="699" stroke="#0000ff" stroke-width="2"/><line x1="906" y1="223" x2="906" y2="427" stroke="#0000ff" stroke-width="2"/><line x1="1110" y1="223" x2="1246" y2="223" stroke="#0000ff" stroke-width="2"/><line x1="1110" y1="223" x2="1110" y2="545" stroke="#0000ff" stroke-width="2"/><line x1="1246" y1="223" x2="1246" y2="427" stroke="#0000ff" stroke-width="2"/><line x1="1382" y1="223" x2="1518" y2="223" stroke="#003c00" stroke-width="2"/><line x1="1382" y1="223" x2="1382" y2="545" stroke="#003c00" stroke-width="2"/><line x1="1518" y1="223" x2="1518" y2="427" stroke="#003c00" stroke-width="2"/><line x1="1654" y1="223" x2="1790" y2="223" stroke="#00ff40" stroke-width="2"/><line x1="1654" y1="223" x2="1654" y2="545" stroke="#00ff40" stroke-width="2"/><line x1="1790" y1="223" x2="1790" y2="427" stroke="#00ff40" stroke-width="2"/></g><path d="M762 252.5 H778 L770 269.885 Z M770 269.885 L775.5 283 H764.5 Z" fill="#fff" stroke="#0000ff" stroke-width="1.1"/><path d="M762.5 426 H777.5 L762.5 457 H777.5 Z" fill="#fff" stroke="#000" stroke-width="1.1"/><path d="M762.5 554 H777.5 L762.5 586 H777.5 Z" fill="#fff" stroke="#000" stroke-width="1.1"/><circle cx="770" cy="570" r="3" fill="#000"/><path d="M1102 251 H1118 L1110 268.67 Z M1110 268.67 L1115.5 282 H1104.5 Z" fill="#fff" stroke="#0000ff" stroke-width="1.1"/><path d="M1102.5 488 H1117.5 L1102.5 520 H1117.5 Z" fill="#fff" stroke="#000" stroke-width="1.1"/><path d="M1374 250 H1390 L1382 268.24 Z M1382 268.24 L1387.5 282 H1376.5 Z" fill="#fff" stroke="#0000ff" stroke-width="1.1"/><path d="M1374.5 488 H1389.5 L1374.5 520 H1389.5 Z" fill="#fff" stroke="#000" stroke-width="1.1"/><path d="M1646 250 H1662 L1654 268.24 Z M1654 268.24 L1659.5 282 H1648.5 Z" fill="#fff" stroke="#0000ff" stroke-width="1.1"/><path d="M1646.5 488 H1661.5 L1646.5 520 H1661.5 Z" fill="#fff" stroke="#000" stroke-width="1.1"/><rect x="894.5" y="425.5" width="23" height="6" fill="#fff" stroke="#000" stroke-width="1"/><rect x="895" y="426" width="22" height="2" fill="#000"/><rect x="903.5" y="426" width="5" height="6" fill="#000"/><rect x="905" y="427" width="2" height="1" fill="#fff"/><rect x="903.5" y="417.5" width="5" height="9" fill="none" stroke="#000" stroke-width="1"/><rect x="1234.5" y="425.5" width="23" height="6" fill="#fff" stroke="#000" stroke-width="1"/><rect x="1235" y="426" width="22" height="2" fill="#000"/><rect x="1243.5" y="426" width="5" height="6" fill="#000"/><rect x="1245" y="427" width="2" height="1" fill="#fff"/><rect x="1243.5" y="417.5" width="5" height="9" fill="none" stroke="#000" stroke-width="1"/><rect x="1506.5" y="425.5" width="23" height="6" fill="#fff" stroke="#000" stroke-width="1"/><rect x="1507" y="426" width="22" height="2" fill="#000"/><rect x="1515.5" y="426" width="5" height="6" fill="#000"/><rect x="1517" y="427" width="2" height="1" fill="#fff"/><rect x="1515.5" y="417.5" width="5" height="9" fill="none" stroke="#000" stroke-width="1"/><rect x="758.5" y="697.5" width="23" height="6" fill="#fff" stroke="#000" stroke-width="1"/><rect x="759" y="698" width="22" height="2" fill="#000"/><rect x="767.5" y="698" width="5" height="6" fill="#000"/><rect x="769" y="699" width="2" height="1" fill="#fff"/><rect x="767.5" y="689.5" width="5" height="9" fill="none" stroke="#000" stroke-width="1"/><rect x="281.5" y="1037.5" width="23" height="6" fill="#fff" stroke="#000" stroke-width="1"/><rect x="282" y="1038" width="22" height="2" fill="#000"/><rect x="290.5" y="1038" width="5" height="6" fill="#000"/><rect x="292" y="1039" width="2" height="1" fill="#fff"/><rect x="290.5" y="1029.5" width="5" height="9" fill="none" stroke="#000" stroke-width="1"/><rect x="417.5" y="1037.5" width="23" height="6" fill="#fff" stroke="#000" stroke-width="1"/><rect x="418" y="1038" width="22" height="2" fill="#000"/><rect x="426.5" y="1038" width="5" height="6" fill="#000"/><rect x="428" y="1039" width="2" height="1" fill="#fff"/><rect x="426.5" y="1029.5" width="5" height="9" fill="none" stroke="#000" stroke-width="1"/><path d="M154 425h6v5h-6zM156 424h2v1h-2z" fill="#000"/><rect x="155" y="427" width="3" height="1" fill="#fff"/><path d="M382 425h6v5h-6zM384 424h2v1h-2z" fill="#000"/><rect x="383" y="427" width="3" height="1" fill="#fff"/><path d="M992 425h6v5h-6zM994 424h2v1h-2z" fill="#000"/><rect x="993" y="427" width="3" height="1" fill="#fff"/><path d="M767 221h6v5h-6zM769 220h2v1h-2z" fill="#000"/><rect x="768" y="223" width="3" height="1" fill="#fff"/><path d="M903 221h6v5h-6zM905 220h2v1h-2z" fill="#000"/><rect x="904" y="223" width="3" height="1" fill="#fff"/><path d="M767 309h6v5h-6zM769 308h2v1h-2z" fill="#000"/><rect x="768" y="311" width="3" height="1" fill="#fff"/><path d="M1107 221h6v5h-6zM1109 220h2v1h-2z" fill="#000"/><rect x="1108" y="223" width="3" height="1" fill="#fff"/><path d="M1243 221h6v5h-6zM1245 220h2v1h-2z" fill="#000"/><rect x="1244" y="223" width="3" height="1" fill="#fff"/><path d="M1107 306h6v5h-6zM1109 305h2v1h-2z" fill="#000"/><rect x="1108" y="308" width="3" height="1" fill="#fff"/><path d="M1379 221h6v5h-6zM1381 220h2v1h-2z" fill="#000"/><rect x="1380" y="223" width="3" height="1" fill="#fff"/><path d="M1515 221h6v5h-6zM1517 220h2v1h-2z" fill="#000"/><rect x="1516" y="223" width="3" height="1" fill="#fff"/><path d="M1379 306h6v5h-6zM1381 305h2v1h-2z" fill="#000"/><rect x="1380" y="308" width="3" height="1" fill="#fff"/><path d="M1588 425h6v5h-6zM1590 424h2v1h-2z" fill="#000"/><rect x="1589" y="427" width="3" height="1" fill="#fff"/><path d="M1651 221h6v5h-6zM1653 220h2v1h-2z" fill="#000"/><rect x="1652" y="223" width="3" height="1" fill="#fff"/><path d="M1787 221h6v5h-6zM1789 220h2v1h-2z" fill="#000"/><rect x="1788" y="223" width="3" height="1" fill="#fff"/><path d="M1651 306h6v5h-6zM1653 305h2v1h-2z" fill="#000"/><rect x="1652" y="308" width="3" height="1" fill="#fff"/><path d="M1787 425h6v5h-6zM1789 424h2v1h-2z" fill="#000"/><rect x="1788" y="427" width="3" height="1" fill="#fff"/><path d="M426 697h6v5h-6zM428 696h2v1h-2z" fill="#000"/><rect x="427" y="699" width="3" height="1" fill="#fff"/><path d="M851 697h6v5h-6zM853 696h2v1h-2z" fill="#000"/><rect x="852" y="699" width="3" height="1" fill="#fff"/><path d="M290 833h6v5h-6zM292 832h2v1h-2z" fill="#000"/><rect x="291" y="835" width="3" height="1" fill="#fff"/><path d="M392 833h6v5h-6zM394 832h2v1h-2z" fill="#000"/><rect x="393" y="835" width="3" height="1" fill="#fff"/><path d="M426 833h6v5h-6zM428 832h2v1h-2z" fill="#000"/><rect x="427" y="835" width="3" height="1" fill="#fff"/><path d="M453 833h6v5h-6zM455 832h2v1h-2z" fill="#000"/><rect x="454" y="835" width="3" height="1" fill="#fff"/><path d="M562 833h6v5h-6zM564 832h2v1h-2z" fill="#000"/><rect x="563" y="835" width="3" height="1" fill="#fff"/><path d="M154 1037h6v5h-6zM156 1036h2v1h-2z" fill="#000"/><rect x="155" y="1039" width="3" height="1" fill="#fff"/><path d="M354 1037h6v5h-6zM356 1036h2v1h-2z" fill="#000"/><rect x="355" y="1039" width="3" height="1" fill="#fff"/><path d="M562 1037h6v5h-6zM564 1036h2v1h-2z" fill="#000"/><rect x="563" y="1039" width="3" height="1" fill="#fff"/><circle cx="1794.5" cy="691" r="11" fill="none" stroke="#0000ff" stroke-width="1.2"/><rect x="1791" y="697" width="7" height="5" fill="#fff" stroke="#0000ff" stroke-width="1.6"/><text x="1794.5" y="694.6" fill="#0000ff" font-size="13" text-anchor="middle" font-family="Liberation Mono">13</text><circle cx="293" cy="937" r="15.5" fill="#fff" stroke="#0000ff" stroke-width="1.1"/><path d="M277.5 937 L293 922 L308.5 937" fill="none" stroke="#0000ff" stroke-width="1.1"/><rect x="261" y="920" width="66" height="4" fill="#ff0000"/><circle cx="429" cy="937" r="15.5" fill="#fff" stroke="#0000ff" stroke-width="1.1"/><path d="M413.5 937 L429 922 L444.5 937" fill="none" stroke="#0000ff" stroke-width="1.1"/><circle cx="565" cy="937" r="15.5" fill="#fff" stroke="#0000ff" stroke-width="1.1"/><path d="M549.5 937 L565 922 L580.5 937" fill="none" stroke="#0000ff" stroke-width="1.1"/><rect x="533" y="920" width="66" height="4" fill="#ff0000"/><rect x="402.5" y="392.5" width="7" height="20" fill="#fff" stroke="#000" stroke-width="1"/><path d="M402 397h8M402 402h8M402 407h8" stroke="#000" stroke-width="1"/><rect x="405" y="396" width="2" height="13" fill="#f00"/><path d="M378.5 436.5V457.5H384M378.5 440.5H384M389 436.5V440" stroke="#0000ff" stroke-width="1.3" fill="none"/><path d="M384 440L386.5 437L389 440V455L386.5 459L384 455Z" fill="none" stroke="#000" stroke-width="1"/><text x="271" y="418.6" fill="#000" font-size="13" text-anchor="middle" font-family="Liberation Mono">159.27</text><text x="271" y="444.6" fill="#000" font-size="13" text-anchor="middle" font-family="Liberation Mono">10.000</text><text x="577" y="418.6" fill="#000" font-size="13" text-anchor="middle" font-family="Liberation Mono">159.27</text><text x="577" y="444.6" fill="#000" font-size="13" text-anchor="middle" font-family="Liberation Mono">30.000</text><text x="950" y="418.6" fill="#000" font-size="13" text-anchor="middle" font-family="Liberation Mono">159.27</text><text x="950" y="444.6" fill="#000" font-size="13" text-anchor="middle" font-family="Liberation Mono">2.000</text><text x="1178" y="418.6" fill="#003c00" font-size="13" text-anchor="middle" font-family="Liberation Mono">154.05</text><text x="1178" y="444.6" fill="#003c00" font-size="13" text-anchor="middle" font-family="Liberation Mono">3.000</text><text x="1382" y="418.6" fill="#003c00" font-size="13" text-anchor="middle" font-family="Liberation Mono">107.14</text><text x="1383" y="443.6" fill="#003c00" font-size="13" text-anchor="middle" font-family="Liberation Mono">5.000</text><text x="1722" y="418.6" fill="#00ff40" font-size="13" text-anchor="middle" font-family="Liberation Mono">54.79</text><text x="1722" y="444.6" fill="#00ff40" font-size="13" text-anchor="middle" font-family="Liberation Mono">4.000</text><text x="838" y="214.6" fill="#0000ff" font-size="13" text-anchor="middle" font-family="Liberation Mono">90.12</text><text x="838" y="240.6" fill="#0000ff" font-size="13" text-anchor="middle" font-family="Liberation Mono">2.000</text><text x="1178" y="214.6" fill="#0000ff" font-size="13" text-anchor="middle" font-family="Liberation Mono">82.50</text><text x="1178" y="240.6" fill="#0000ff" font-size="13" text-anchor="middle" font-family="Liberation Mono">2.000</text><text x="1450" y="214.6" fill="#003c00" font-size="13" text-anchor="middle" font-family="Liberation Mono">107.14</text><text x="1450" y="240.6" fill="#003c00" font-size="13" text-anchor="middle" font-family="Liberation Mono">2.000</text><text x="1722" y="214.6" fill="#00ff40" font-size="13" text-anchor="middle" font-family="Liberation Mono">54.79</text><text x="1722" y="240.6" fill="#00ff40" font-size="13" text-anchor="middle" font-family="Liberation Mono">2.000</text><text x="599" y="690.6" fill="#000" font-size="13" text-anchor="middle" font-family="Liberation Mono">159.27</text><text x="599" y="716.6" fill="#000" font-size="13" text-anchor="middle" font-family="Liberation Mono">22.000</text><text x="812" y="716.6" fill="#000" font-size="13" text-anchor="middle" font-family="Liberation Mono">1.000</text><text x="1725" y="690.6" fill="#003c00" font-size="13" text-anchor="middle" font-family="Liberation Mono">107.14</text><text x="1722" y="716.6" fill="#003c00" font-size="13" text-anchor="middle" font-family="Liberation Mono">1.000</text><text x="344" y="826.6" fill="#003c00" font-size="13" text-anchor="middle" font-family="Liberation Mono">128.19</text><text x="344" y="852.6" fill="#003c00" font-size="13" text-anchor="middle" font-family="Liberation Mono">1.500</text><text x="511" y="826.6" fill="#003c00" font-size="13" text-anchor="middle" font-family="Liberation Mono">128.19</text><text x="511" y="852.6" fill="#003c00" font-size="13" text-anchor="middle" font-family="Liberation Mono">1.500</text><text x="225" y="1029.6" fill="#000" font-size="13" text-anchor="middle" font-family="Liberation Mono">159.27</text><text x="225" y="1055.6" fill="#000" font-size="13" text-anchor="middle" font-family="Liberation Mono">3.000</text><text x="497" y="1029.6" fill="#003c00" font-size="13" text-anchor="middle" font-family="Liberation Mono">128.19</text><text x="497" y="1055.6" fill="#003c00" font-size="13" text-anchor="middle" font-family="Liberation Mono">2.000</text><text transform="translate(147.5,733) rotate(-90)" fill="#000" font-size="13" text-anchor="middle" font-family="Liberation Mono">159.27</text><text transform="translate(174.5,733) rotate(-90)" fill="#000" font-size="13" text-anchor="middle" font-family="Liberation Mono">25.000</text><text transform="translate(419.5,765) rotate(-90)" fill="#000" font-size="13" text-anchor="middle" font-family="Liberation Mono">159.27</text><text transform="translate(446.5,765) rotate(-90)" fill="#000" font-size="13" text-anchor="middle" font-family="Liberation Mono">11.000</text><text transform="translate(755.5,267) rotate(-90)" fill="#0000ff" font-size="13" text-anchor="middle" font-family="Liberation Mono">90.12</text><text transform="translate(791.5,267) rotate(-90)" fill="#0000ff" font-size="13" text-anchor="middle" font-family="Liberation Mono">2.000</text><text transform="translate(894.5,325) rotate(-90)" fill="#0000ff" font-size="13" text-anchor="middle" font-family="Liberation Mono">90.12</text><text transform="translate(922.5,325) rotate(-90)" fill="#0000ff" font-size="13" text-anchor="middle" font-family="Liberation Mono">3.000</text><text transform="translate(755.5,563) rotate(-90)" fill="#0000ff" font-size="13" text-anchor="middle" font-family="Liberation Mono">90.12</text><text transform="translate(791.5,563) rotate(-90)" fill="#0000ff" font-size="13" text-anchor="middle" font-family="Liberation Mono">6.000</text><text transform="translate(1095.5,267) rotate(-90)" fill="#0000ff" font-size="13" text-anchor="middle" font-family="Liberation Mono">82.50</text><text transform="translate(1131.5,267) rotate(-90)" fill="#0000ff" font-size="13" text-anchor="middle" font-family="Liberation Mono">2.000</text><text transform="translate(1236.5,325) rotate(-90)" fill="#0000ff" font-size="13" text-anchor="middle" font-family="Liberation Mono">82.50</text><text transform="translate(1263.5,325) rotate(-90)" fill="#0000ff" font-size="13" text-anchor="middle" font-family="Liberation Mono">3.000</text><text transform="translate(1407.5,265) rotate(-90)" fill="#003c00" font-size="13" text-anchor="middle" font-family="Liberation Mono">2.000</text><text transform="translate(1509.5,324) rotate(-90)" fill="#003c00" font-size="13" text-anchor="middle" font-family="Liberation Mono">107.14</text><text transform="translate(1535.5,325) rotate(-90)" fill="#003c00" font-size="13" text-anchor="middle" font-family="Liberation Mono">3.000</text><text transform="translate(1366.5,443) rotate(-90)" fill="#003c00" font-size="13" text-anchor="middle" font-family="Liberation Mono">107.14</text><text transform="translate(1403.5,443) rotate(-90)" fill="#003c00" font-size="13" text-anchor="middle" font-family="Liberation Mono">6.000</text><text transform="translate(1638.5,265) rotate(-90)" fill="#00ff40" font-size="13" text-anchor="middle" font-family="Liberation Mono">54.79</text><text transform="translate(1676.5,265) rotate(-90)" fill="#00ff40" font-size="13" text-anchor="middle" font-family="Liberation Mono">2.000</text><text transform="translate(1780.5,325) rotate(-90)" fill="#00ff40" font-size="13" text-anchor="middle" font-family="Liberation Mono">54.79</text><text transform="translate(1807.5,325) rotate(-90)" fill="#00ff40" font-size="13" text-anchor="middle" font-family="Liberation Mono">3.000</text><text transform="translate(1638.5,445) rotate(-90)" fill="#00ff40" font-size="13" text-anchor="middle" font-family="Liberation Mono">54.79</text><text transform="translate(1675.5,445) rotate(-90)" fill="#00ff40" font-size="13" text-anchor="middle" font-family="Liberation Mono">6.000</text><text transform="translate(277.5,935) rotate(-90)" fill="#003c00" font-size="13" text-anchor="middle" font-family="Liberation Mono">128.19</text><text transform="translate(316.5,935) rotate(-90)" fill="#003c00" font-size="13" text-anchor="middle" font-family="Liberation Mono">5.000</text><text transform="translate(414.5,935) rotate(-90)" fill="#003c00" font-size="13" text-anchor="middle" font-family="Liberation Mono">107.14</text><text transform="translate(451.5,935) rotate(-90)" fill="#003c00" font-size="13" text-anchor="middle" font-family="Liberation Mono">5.000</text><text transform="translate(550.5,935) rotate(-90)" fill="#003c00" font-size="13" text-anchor="middle" font-family="Liberation Mono">128.19</text><text transform="translate(588.5,935) rotate(-90)" fill="#003c00" font-size="13" text-anchor="middle" font-family="Liberation Mono">5.000</text><text x="143" y="422.6" fill="#000" font-size="13" text-anchor="middle" font-family="Liberation Mono">41</text><text x="365" y="452.6" fill="#000" font-size="13" text-anchor="middle" font-family="Liberation Mono">39</text><text x="754" y="213.6" fill="#000" font-size="13" text-anchor="middle" font-family="Liberation Mono">17</text><text x="920" y="206.6" fill="#000" font-size="13" text-anchor="middle" font-family="Liberation Mono">19</text><text x="758" y="324.6" fill="#000" font-size="13" text-anchor="middle" font-family="Liberation Mono">15</text><text x="889" y="413.6" fill="#000" font-size="13" text-anchor="middle" font-family="Liberation Mono">21</text><text x="1007" y="413.6" fill="#000" font-size="13" text-anchor="middle" font-family="Liberation Mono">23</text><text x="1110" y="218.6" fill="#000" font-size="13" text-anchor="middle" font-family="Liberation Mono">65</text><text x="1246" y="218.6" fill="#000" font-size="13" text-anchor="middle" font-family="Liberation Mono">63</text><text x="1110" y="320.6" fill="#000" font-size="13" text-anchor="middle" font-family="Liberation Mono">67</text><text x="1246" y="421.6" fill="#000" font-size="13" text-anchor="middle" font-family="Liberation Mono">25</text><text x="1382" y="218.6" fill="#000" font-size="13" text-anchor="middle" font-family="Liberation Mono">71</text><text x="1518" y="218.6" fill="#000" font-size="13" text-anchor="middle" font-family="Liberation Mono">69</text><text x="1382" y="320.6" fill="#000" font-size="13" text-anchor="middle" font-family="Liberation Mono">73</text><text x="1518" y="421.6" fill="#000" font-size="13" text-anchor="middle" font-family="Liberation Mono">27</text><text x="1591" y="421.6" fill="#000" font-size="13" text-anchor="middle" font-family="Liberation Mono">29</text><text x="1654" y="218.6" fill="#000" font-size="13" text-anchor="middle" font-family="Liberation Mono">35</text><text x="1790" y="218.6" fill="#000" font-size="13" text-anchor="middle" font-family="Liberation Mono">33</text><text x="1654" y="320.6" fill="#000" font-size="13" text-anchor="middle" font-family="Liberation Mono">37</text><text x="1790" y="421.6" fill="#000" font-size="13" text-anchor="middle" font-family="Liberation Mono">31</text><text x="429" y="694.6" fill="#000" font-size="13" text-anchor="middle" font-family="Liberation Mono">1</text><text x="770" y="696.6" fill="#000" font-size="13" text-anchor="middle" font-family="Liberation Mono">3</text><text x="854" y="694.6" fill="#000" font-size="13" text-anchor="middle" font-family="Liberation Mono">5</text><text x="293" y="829.6" fill="#000" font-size="13" text-anchor="middle" font-family="Liberation Mono">61</text><text x="395" y="829.6" fill="#000" font-size="13" text-anchor="middle" font-family="Liberation Mono">59</text><text x="429" y="829.6" fill="#000" font-size="13" text-anchor="middle" font-family="Liberation Mono">57</text><text x="456" y="829.6" fill="#000" font-size="13" text-anchor="middle" font-family="Liberation Mono">55</text><text x="565" y="829.6" fill="#000" font-size="13" text-anchor="middle" font-family="Liberation Mono">53</text><text x="157" y="1033.6" fill="#000" font-size="13" text-anchor="middle" font-family="Liberation Mono">43</text><text x="293" y="1033.6" fill="#000" font-size="13" text-anchor="middle" font-family="Liberation Mono">45</text><text x="357" y="1033.6" fill="#000" font-size="13" text-anchor="middle" font-family="Liberation Mono">47</text><text x="429" y="1033.6" fill="#000" font-size="13" text-anchor="middle" font-family="Liberation Mono">49</text><text x="565" y="1033.6" fill="#000" font-size="13" text-anchor="middle" font-family="Liberation Mono">51</text><line x1="142" y1="423" x2="155" y2="426" stroke="#000" stroke-width="1" stroke-dasharray="2,2"/><line x1="368" y1="441" x2="382" y2="430" stroke="#000" stroke-width="1" stroke-dasharray="2,2"/><line x1="756" y1="217" x2="767" y2="222" stroke="#000" stroke-width="1" stroke-dasharray="2,2"/><line x1="925" y1="206" x2="912" y2="219" stroke="#000" stroke-width="1" stroke-dasharray="2,2"/><line x1="762" y1="313" x2="767" y2="311" stroke="#000" stroke-width="1" stroke-dasharray="2,2"/><line x1="893" y1="417" x2="902" y2="424" stroke="#000" stroke-width="1" stroke-dasharray="2,2"/><line x1="1007" y1="419" x2="998" y2="425" stroke="#000" stroke-width="1" stroke-dasharray="2,2"/><line x1="1112" y1="213" x2="1110" y2="220" stroke="#000" stroke-width="1" stroke-dasharray="2,2"/><line x1="1248" y1="213" x2="1246" y2="220" stroke="#000" stroke-width="1" stroke-dasharray="2,2"/><line x1="1384" y1="213" x2="1382" y2="220" stroke="#000" stroke-width="1" stroke-dasharray="2,2"/><line x1="1520" y1="213" x2="1518" y2="220" stroke="#000" stroke-width="1" stroke-dasharray="2,2"/><line x1="1593" y1="416" x2="1591" y2="424" stroke="#000" stroke-width="1" stroke-dasharray="2,2"/><line x1="1656" y1="213" x2="1654" y2="220" stroke="#000" stroke-width="1" stroke-dasharray="2,2"/><line x1="1792" y1="213" x2="1790" y2="220" stroke="#000" stroke-width="1" stroke-dasharray="2,2"/><line x1="1792" y1="416" x2="1790" y2="424" stroke="#000" stroke-width="1" stroke-dasharray="2,2"/><line x1="431" y1="689" x2="429" y2="696" stroke="#000" stroke-width="1" stroke-dasharray="2,2"/><line x1="856" y1="689" x2="854" y2="696" stroke="#000" stroke-width="1" stroke-dasharray="2,2"/><text x="768" y="116" fill="#000" font-size="21" font-weight="bold" font-family="Liberation Sans">Consumer 1:</text><text x="768" y="145" fill="#000" font-size="21" font-weight="bold" font-family="Liberation Sans">dp 0.9 bar</text><text x="768" y="174" fill="#000" font-size="21" font-weight="bold" font-family="Liberation Sans">at 50 t/h</text><text x="1126" y="116" fill="#000" font-size="21" font-weight="bold" font-family="Liberation Sans">Consumer 2:</text><text x="1126" y="145" fill="#000" font-size="21" font-weight="bold" font-family="Liberation Sans">dp 0.8 bar</text><text x="1126" y="174" fill="#000" font-size="21" font-weight="bold" font-family="Liberation Sans">at 40 t/h</text><text x="1412" y="112" fill="#000" font-size="21" font-weight="bold" font-family="Liberation Sans">Consumer 3:</text><text x="1412" y="141" fill="#000" font-size="21" font-weight="bold" font-family="Liberation Sans">dp 0.8 bar</text><text x="1412" y="170" fill="#000" font-size="21" font-weight="bold" font-family="Liberation Sans">at 40 t/h</text><text x="1698" y="115" fill="#000" font-size="21" font-weight="bold" font-family="Liberation Sans">Consumer 4:</text><text x="1698" y="144" fill="#000" font-size="21" font-weight="bold" font-family="Liberation Sans">dp 0.6 bar</text><text x="1698" y="173" fill="#000" font-size="21" font-weight="bold" font-family="Liberation Sans">at 40 t/h</text><text x="349" y="244" fill="#000" font-size="21" font-weight="bold" font-family="Liberation Sans">Closed Loop</text><text x="349" y="302" fill="#000" font-size="21" font-weight="bold" font-family="Liberation Sans">Inflow:</text><text x="486" y="302" fill="#000" font-size="21" font-weight="bold" font-family="Liberation Sans">0 t/h</text><text x="349" y="331" fill="#000" font-size="21" font-weight="bold" font-family="Liberation Sans">Pressure:</text><text x="489" y="331" fill="#000" font-size="21" font-weight="bold" font-family="Liberation Sans">5 bar</text><text x="349" y="361" fill="#000" font-size="21" font-weight="bold" font-family="Liberation Sans">Temperature</text><text x="490" y="361" fill="#000" font-size="21" font-weight="bold" font-family="Liberation Sans">20 °C</text><text x="317" y="1082" fill="#000" font-size="21" font-weight="bold" font-family="Liberation Sans">Pump 50%</text><text x="442" y="1082" fill="#000" font-size="21" font-weight="bold" font-family="Liberation Sans">Pump 100%</text><text x="567" y="1082" fill="#000" font-size="21" font-weight="bold" font-family="Liberation Sans">Pump 50%</text></g></svg><div class="dlg" style="left:897px;top:540px;width:832px;height:292px"></div><div class="box" style="left:898px;top:541px;width:830px;height:30px;background:#fff"></div><svg class="box" style="left:906px;top:546px" width="16" height="16"><rect width="16" height="16" fill="#0022ff"/><path d="M6.5 0.5L6 2.5L9.5 1.5M6 2.5Q3 6 3.5 9Q5 11.5 9.5 12Q10.5 13.5 7 14.5" stroke="#fff" stroke-width="1.5" fill="none"/></svg><div class="ttl" style="left:927px;top:547px;color:#9a9a9a">Dimensions - DN150.0</div><svg class="box" style="left:1707px;top:548px" width="12" height="12"><path d="M1 1L11 11M11 1L1 11" stroke="#777" stroke-width="1"/></svg><div class="ui" style="left:923px;top:573px;color:#000;">Filter:</div><div class="box" style="left:904px;top:588px;width:97px;height:215px;border:1px solid #828790;background:#fff"></div><div class="box" style="left:906px;top:590px;width:94px;height:104px;background:#3399ff"></div><div class="ui" style="left:907px;top:590px;color:#fff;width:93px;overflow:hidden">DA/H [mm]</div><div class="ui" style="left:907px;top:603px;color:#fff;width:93px;overflow:hidden">S/B [mm]</div><div class="ui" style="left:907px;top:616px;color:#fff;width:93px;overflow:hidden">Type</div><div class="ui" style="left:907px;top:629px;color:#fff;width:93px;overflow:hidden">K [mm]</div><div class="ui" style="left:907px;top:642px;color:#fff;width:93px;overflow:hidden">Type of insulation</div><div class="ui" style="left:907px;top:655px;color:#fff;width:93px;overflow:hidden">Insulation thickness</div><div class="ui" style="left:907px;top:668px;color:#fff;width:93px;overflow:hidden">Color</div><div class="ui" style="left:907px;top:681px;color:#fff;width:93px;overflow:hidden">Pen width [mm]</div><div class="box" style="left:1006px;top:573px;width:717px;height:229px;border:1px solid #828790;background:#fff"></div><div class="box" style="left:1077px;top:574px;width:1px;height:24px;background:#e5e5e5"></div><div class="box" style="left:1147px;top:574px;width:1px;height:24px;background:#e5e5e5"></div><div class="box" style="left:1217px;top:574px;width:1px;height:24px;background:#e5e5e5"></div><div class="box" style="left:1261px;top:574px;width:1px;height:24px;background:#e5e5e5"></div><div class="box" style="left:1331px;top:574px;width:1px;height:24px;background:#e5e5e5"></div><div class="box" style="left:1401px;top:574px;width:1px;height:24px;background:#e5e5e5"></div><div class="box" style="left:1471px;top:574px;width:1px;height:24px;background:#e5e5e5"></div><div class="box" style="left:1516px;top:574px;width:1px;height:24px;background:#e5e5e5"></div><div class="box" style="left:1589px;top:574px;width:1px;height:24px;background:#e5e5e5"></div><div class="ui" style="left:1013px;top:580px;color:#000;">Nom. dia...</div><div class="ui" style="left:1084px;top:580px;color:#000;">DA/H [mm]</div><div class="ui" style="left:1154px;top:580px;color:#000;">S/B [mm]</div><div class="ui" style="left:1224px;top:580px;color:#000;">Type</div><div class="ui" style="left:1268px;top:580px;color:#000;">K [mm]</div><div class="ui" style="left:1338px;top:580px;color:#000;">Type of i...</div><div class="ui" style="left:1408px;top:580px;color:#000;">Insulatio...</div><div class="ui" style="left:1478px;top:580px;color:#000;">Color</div><div class="ui" style="left:1523px;top:580px;color:#000;">Pen width...</div><svg class="box" style="left:1008px;top:598px" width="17" height="16"><rect x="3" y="3" width="10" height="10" fill="#fff" stroke="#f00" stroke-width="2.2"/><path d="M1.5 1.5L15 15M15 1.5L1.5 15" stroke="#f00" stroke-width="2.4"/><path d="M1.5 1.5l2 2M15 1.5l-2 2M1.5 15l2-2M15 15l-2-2M13 5v7" stroke="#000" stroke-width="1" stroke-dasharray="1.5,1.5"/></svg><div class="ui" style="left:1030px;top:599px;color:#000;">NPS4.0</div><div class="ui" style="left:944px;top:599px;width:200px;text-align:right;color:#000">114.30</div><div class="ui" style="left:1014px;top:599px;width:200px;text-align:right;color:#000">3.58</div><div class="ui" style="left:1058px;top:599px;width:200px;text-align:right;color:#000">RO</div><div class="ui" style="left:1128px;top:599px;width:200px;text-align:right;color:#000">0.100</div><div class="box" style="left:1477px;top:601px;width:35px;height:11px;background:#003c00"></div><div class="ui" style="left:1386px;top:599px;width:200px;text-align:right;color:#000">0.50</div><svg class="box" style="left:1008px;top:612px" width="17" height="16"><rect x="3" y="3" width="10" height="10" fill="#fff" stroke="#f00" stroke-width="2.2"/><path d="M1.5 1.5L15 15M15 1.5L1.5 15" stroke="#f00" stroke-width="2.4"/><path d="M1.5 1.5l2 2M15 1.5l-2 2M1.5 15l2-2M15 15l-2-2M13 5v7" stroke="#000" stroke-width="1" stroke-dasharray="1.5,1.5"/></svg><div class="ui" style="left:1030px;top:613px;color:#000;">NPS3.0</div><div class="ui" style="left:944px;top:613px;width:200px;text-align:right;color:#000">88.90</div><div class="ui" style="left:1014px;top:613px;width:200px;text-align:right;color:#000">3.20</div><div class="ui" style="left:1058px;top:613px;width:200px;text-align:right;color:#000">RO</div><div class="ui" style="left:1128px;top:613px;width:200px;text-align:right;color:#000">0.100</div><div class="box" style="left:1477px;top:615px;width:35px;height:11px;background:#0000ff"></div><div class="ui" style="left:1386px;top:613px;width:200px;text-align:right;color:#000">0.50</div><svg class="box" style="left:1008px;top:626px" width="17" height="16"><rect x="3" y="3" width="10" height="10" fill="#fff" stroke="#f00" stroke-width="2.2"/><path d="M1.5 1.5L15 15M15 1.5L1.5 15" stroke="#f00" stroke-width="2.4"/><path d="M1.5 1.5l2 2M15 1.5l-2 2M1.5 15l2-2M15 15l-2-2M13 5v7" stroke="#000" stroke-width="1" stroke-dasharray="1.5,1.5"/></svg><div class="ui" style="left:1030px;top:627px;color:#000;">NPS2.0</div><div class="ui" style="left:944px;top:627px;width:200px;text-align:right;color:#000">60.33</div><div class="ui" style="left:1014px;top:627px;width:200px;text-align:right;color:#000">2.77</div><div class="ui" style="left:1058px;top:627px;width:200px;text-align:right;color:#000">RO</div><div class="ui" style="left:1128px;top:627px;width:200px;text-align:right;color:#000">0.100</div><div class="box" style="left:1477px;top:629px;width:35px;height:11px;background:#00ff40"></div><div class="ui" style="left:1386px;top:627px;width:200px;text-align:right;color:#000">0.50</div><svg class="box" style="left:1008px;top:640px" width="17" height="16"><rect x="3" y="3" width="10" height="10" fill="#fff" stroke="#f00" stroke-width="2.2"/><path d="M1.5 1.5L15 15M15 1.5L1.5 15" stroke="#f00" stroke-width="2.4"/><path d="M1.5 1.5l2 2M15 1.5l-2 2M1.5 15l2-2M15 15l-2-2M13 5v7" stroke="#000" stroke-width="1" stroke-dasharray="1.5,1.5"/></svg><div class="ui" style="left:1030px;top:641px;color:#000;">NPS6.0</div><div class="ui" style="left:944px;top:641px;width:200px;text-align:right;color:#000">168.27</div><div class="ui" style="left:1014px;top:641px;width:200px;text-align:right;color:#000">4.50</div><div class="ui" style="left:1058px;top:641px;width:200px;text-align:right;color:#000">RO</div><div class="ui" style="left:1128px;top:641px;width:200px;text-align:right;color:#000">0.100</div><div class="box" style="left:1477px;top:643px;width:35px;height:11px;background:#000000"></div><div class="ui" style="left:1386px;top:641px;width:200px;text-align:right;color:#000">0.50</div><svg class="box" style="left:1008px;top:654px" width="17" height="16"><rect x="3" y="3" width="10" height="10" fill="#fff" stroke="#f00" stroke-width="2.2"/><path d="M1.5 1.5L15 15M15 1.5L1.5 15" stroke="#f00" stroke-width="2.4"/><path d="M1.5 1.5l2 2M15 1.5l-2 2M1.5 15l2-2M15 15l-2-2M13 5v7" stroke="#000" stroke-width="1" stroke-dasharray="1.5,1.5"/></svg><div class="ui" style="left:1030px;top:655px;color:#000;">DN125.0</div><div class="ui" style="left:944px;top:655px;width:200px;text-align:right;color:#000">141.30</div><div class="ui" style="left:1014px;top:655px;width:200px;text-align:right;color:#000">3.58</div><div class="ui" style="left:1058px;top:655px;width:200px;text-align:right;color:#000">RO</div><div class="ui" style="left:1128px;top:655px;width:200px;text-align:right;color:#000">0.100</div><div class="box" style="left:1477px;top:657px;width:35px;height:11px;background:#003c00"></div><div class="ui" style="left:1386px;top:655px;width:200px;text-align:right;color:#000">0.50</div><svg class="box" style="left:1008px;top:668px" width="17" height="16"><rect x="3" y="3" width="10" height="10" fill="#fff" stroke="#f00" stroke-width="2.2"/><path d="M1.5 1.5L15 15M15 1.5L1.5 15" stroke="#f00" stroke-width="2.4"/><path d="M1.5 1.5l2 2M15 1.5l-2 2M1.5 15l2-2M15 15l-2-2M13 5v7" stroke="#000" stroke-width="1" stroke-dasharray="1.5,1.5"/></svg><div class="ui" style="left:1030px;top:669px;color:#000;">DN100.0</div><div class="ui" style="left:944px;top:669px;width:200px;text-align:right;color:#000">114.30</div><div class="ui" style="left:1014px;top:669px;width:200px;text-align:right;color:#000">3.20</div><div class="ui" style="left:1058px;top:669px;width:200px;text-align:right;color:#000">RO</div><div class="ui" style="left:1128px;top:669px;width:200px;text-align:right;color:#000">0.100</div><div class="box" style="left:1477px;top:671px;width:35px;height:11px;background:#003c00"></div><div class="ui" style="left:1386px;top:669px;width:200px;text-align:right;color:#000">0.50</div><svg class="box" style="left:1008px;top:682px" width="17" height="16"><rect x="3" y="3" width="10" height="10" fill="#fff" stroke="#f00" stroke-width="2.2"/><path d="M1.5 1.5L15 15M15 1.5L1.5 15" stroke="#f00" stroke-width="2.4"/><path d="M1.5 1.5l2 2M15 1.5l-2 2M1.5 15l2-2M15 15l-2-2M13 5v7" stroke="#000" stroke-width="1" stroke-dasharray="1.5,1.5"/></svg><div class="ui" style="left:1030px;top:683px;color:#000;">DN150.0</div><div class="ui" style="left:944px;top:683px;width:200px;text-align:right;color:#000">168.30</div><div class="ui" style="left:1014px;top:683px;width:200px;text-align:right;color:#000">4.50</div><div class="ui" style="left:1058px;top:683px;width:200px;text-align:right;color:#000">RO</div><div class="ui" style="left:1128px;top:683px;width:200px;text-align:right;color:#000">0.100</div><div class="box" style="left:1477px;top:685px;width:35px;height:11px;background:#003c00"></div><div class="ui" style="left:1386px;top:683px;width:200px;text-align:right;color:#000">0.50</div><div class="box" style="left:1508px;top:682px;width:82px;height:15px;background:#3399ff"></div><div class="ui" style="left:1386px;top:682px;width:200px;text-align:right;color:#fff">0.50</div><div class="box" style="left:904px;top:807px;width:73px;height:21px;border:1px solid #adadad;background:#e1e1e1"></div><div class="ui" style="left:904.0px;top:810.5px;width:73px;text-align:center;color:#000;">Assign</div><div class="box" style="left:991px;top:807px;width:73px;height:21px;border:1px solid #adadad;background:#e1e1e1"></div><div class="ui" style="left:1003px;top:810px;color:#000;">Close</div><div class="dlg" style="left:1025px;top:658px;width:556px;height:511px"></div><div class="box" style="left:1026px;top:659px;width:554px;height:30px;background:#fff"></div><div class="ttl" style="left:1034px;top:665px;color:#9a9a9a">Pipe dimensions and insulation</div><svg class="box" style="left:1559px;top:666px" width="12" height="12"><path d="M1 1L11 11M11 1L1 11" stroke="#777" stroke-width="1"/></svg><div class="box" style="left:1037.0px;top:701.0px;width:13px;height:13px;border-radius:50%;border:1px solid #333;background:#fff"></div><div class="box" style="left:1040.5px;top:704.5px;width:6px;height:6px;border-radius:50%;background:#333"></div><div class="ui" style="left:1053px;top:700px;color:#000;">Circular cross section</div><div class="box" style="left:1172.5px;top:701.0px;width:13px;height:13px;border-radius:50%;border:1px solid #333;background:#fff"></div><div class="ui" style="left:1188px;top:700px;color:#000;">Rectangle cross section</div><div class="box" style="left:1318.5px;top:701.0px;width:13px;height:13px;border-radius:50%;border:1px solid #333;background:#fff"></div><div class="ui" style="left:1334px;top:700px;color:#000;">Definition of the hydraulic diameter</div><div class="box" style="left:1037.0px;top:729.0px;width:13px;height:13px;border-radius:50%;border:1px solid #333;background:#fff"></div><div class="ui" style="left:1053px;top:728px;color:#000;">user defined</div><div class="box" style="left:1136.0px;top:729.0px;width:13px;height:13px;border-radius:50%;border:1px solid #333;background:#fff"></div><div class="box" style="left:1139.5px;top:732.5px;width:6px;height:6px;border-radius:50%;background:#333"></div><div class="ui" style="left:1152px;top:728px;color:#000;">Standard</div><div class="box" style="left:1212px;top:725px;width:203px;height:23px;border:1px solid #7a7a7a;background:#e3e3e3;box-shadow:inset 0 0 0 1px #fafafa"></div><div class="ui" style="left:1218px;top:728px;color:#000;">EN 10220 welded</div><div class="box" style="left:1426px;top:726px;width:73px;height:21px;border:1px solid #adadad;background:#e1e1e1"></div><div class="ui" style="left:1426.0px;top:729.5px;width:73px;text-align:center;color:#000;">Standard</div><div class="ui" style="left:1037px;top:761px;color:#000;">Outer diameter</div><div class="box" style="left:1142px;top:757px;width:60px;height:23px;border:1px solid #7a7a7a;background:#fff"></div><div class="ui" style="left:1148px;top:760.5px;color:#000;">219.1</div><div class="ui" style="left:1210px;top:761px;color:#000;">mm</div><div class="ui" style="left:1258px;top:761px;color:#000;">Wall thickness</div><div class="box" style="left:1353px;top:757px;width:60px;height:23px;border:1px solid #7a7a7a;background:#fff"></div><div class="ui" style="left:1359px;top:760.5px;color:#000;">6.3</div><div class="ui" style="left:1423px;top:761px;color:#000;">mm</div><div class="ui" style="left:1072px;top:789px;color:#000;">Roughness</div><div class="box" style="left:1142px;top:786px;width:60px;height:23px;border:1px solid #7a7a7a;background:#fff"></div><div class="ui" style="left:1148px;top:789.5px;color:#000;">0.1</div><div class="ui" style="left:1210px;top:789px;color:#000;">mm</div><div class="box" style="left:1259px;top:786px;width:211px;height:22px;border:1px solid #adadad;background:#e1e1e1"></div><div class="ui" style="left:1263px;top:790px;color:#000;">Casted tubes, sewage</div><div class="box" style="left:1037px;top:829px;width:531px;height:242px;border:1px solid #dcdcdc"></div><div class="box" style="left:1042px;top:822px;width:52px;height:14px;background:#f0f0f0"></div><div class="ui" style="left:1045px;top:822px;color:#000;">Heat loss</div><div class="box" style="left:1049px;top:846px;width:13px;height:13px;border:1px solid #333;background:#fff"></div><div class="ui" style="left:1065px;top:845px;color:#000;">Consider heat loss</div><div class="box" style="left:1244px;top:846px;width:13px;height:13px;border:1px solid #cccccc;background:#fff"></div><div class="ui" style="left:1260px;top:845px;color:#8a8a8a;">buried pipe</div><div class="box" style="left:1351px;top:845px;width:69px;height:20px;border:1px solid #adadad;background:#e1e1e1"></div><div class="ui" style="left:1361px;top:848px;color:#000;">Edit</div><div class="ui" style="left:1063.0px;top:871px;width:300px;text-align:center;color:#000;">Coefficient of thermal conduction</div><div class="ui" style="left:1046px;top:894px;color:#000;">Medium</div><div class="box" style="left:1110px;top:891px;width:125px;height:20px;background:#cccccc;border:1px solid #cccccc"></div><svg class="box" style="left:1220px;top:898px" width="11" height="7"><path d="M0.5 1L5.5 6L10.5 1" fill="none" stroke="#bfbfbf" stroke-width="1.1"/></svg><div class="box" style="left:1239px;top:891px;width:59px;height:21px;border:1px solid #cccccc;background:#e3e3e3;box-shadow:inset 0 0 0 1px #fff"></div><div class="ui" style="left:1245px;top:894.5px;color:#8a8a8a;">0</div><div class="ui" style="left:1304px;top:894px;color:#000;">W/(m*K)</div><div class="ui" style="left:1046px;top:920px;color:#000;">Pipe</div><div class="box" style="left:1110px;top:917px;width:125px;height:20px;background:#cccccc;border:1px solid #cccccc"></div><svg class="box" style="left:1220px;top:924px" width="11" height="7"><path d="M0.5 1L5.5 6L10.5 1" fill="none" stroke="#bfbfbf" stroke-width="1.1"/></svg><div class="box" style="left:1239px;top:917px;width:59px;height:21px;border:1px solid #cccccc;background:#e3e3e3;box-shadow:inset 0 0 0 1px #fff"></div><div class="ui" style="left:1245px;top:920.5px;color:#8a8a8a;">0</div><div class="ui" style="left:1304px;top:920px;color:#000;">W/(m*K)</div><div class="ui" style="left:1046px;top:946px;color:#000;">Insulation</div><div class="box" style="left:1110px;top:943px;width:125px;height:20px;background:#cccccc;border:1px solid #cccccc"></div><div class="ui" style="left:1114px;top:947px;color:#838383;">Standard</div><svg class="box" style="left:1220px;top:950px" width="11" height="7"><path d="M0.5 1L5.5 6L10.5 1" fill="none" stroke="#bfbfbf" stroke-width="1.1"/></svg><div class="box" style="left:1239px;top:943px;width:59px;height:21px;border:1px solid #cccccc;background:#e3e3e3;box-shadow:inset 0 0 0 1px #fff"></div><div class="ui" style="left:1245px;top:946.5px;color:#8a8a8a;">0</div><div class="ui" style="left:1304px;top:946px;color:#000;">W/(m*K)</div><div class="ui" style="left:1046px;top:972px;color:#000;">Jacket</div><div class="box" style="left:1110px;top:969px;width:125px;height:20px;background:#cccccc;border:1px solid #cccccc"></div><svg class="box" style="left:1220px;top:976px" width="11" height="7"><path d="M0.5 1L5.5 6L10.5 1" fill="none" stroke="#bfbfbf" stroke-width="1.1"/></svg><div class="box" style="left:1239px;top:969px;width:59px;height:21px;border:1px solid #cccccc;background:#e3e3e3;box-shadow:inset 0 0 0 1px #fff"></div><div class="ui" style="left:1245px;top:972.5px;color:#8a8a8a;">0</div><div class="ui" style="left:1304px;top:972px;color:#000;">W/(m*K)</div><div class="ui" style="left:1046px;top:998px;color:#000;">Soil</div><div class="box" style="left:1110px;top:995px;width:125px;height:20px;background:#cccccc;border:1px solid #cccccc"></div><svg class="box" style="left:1220px;top:1002px" width="11" height="7"><path d="M0.5 1L5.5 6L10.5 1" fill="none" stroke="#bfbfbf" stroke-width="1.1"/></svg><div class="box" style="left:1239px;top:995px;width:59px;height:21px;border:1px solid #cccccc;background:#e3e3e3;box-shadow:inset 0 0 0 1px #fff"></div><div class="ui" style="left:1245px;top:998.5px;color:#8a8a8a;">0</div><div class="ui" style="left:1304px;top:998px;color:#000;">W/(m*K)</div><div class="box" style="left:1439px;top:970px;width:60px;height:22px;border:1px solid #cccccc;background:#e3e3e3;box-shadow:inset 0 0 0 1px #fff"></div><div class="ui" style="left:1445px;top:974.0px;color:#8a8a8a;"></div><div class="ui" style="left:1364px;top:998px;color:#000;">Überdeckungshöhe</div><div class="box" style="left:1468px;top:995px;width:59px;height:22px;border:1px solid #cccccc;background:#e3e3e3;box-shadow:inset 0 0 0 1px #fff"></div><div class="ui" style="left:1474px;top:999.0px;color:#8a8a8a;">0</div><div class="ui" style="left:1532px;top:998px;color:#000;">m</div><div class="ui" style="left:1085px;top:1038px;color:#000;">Additional heat loss by fittings</div><div class="box" style="left:1239px;top:1035px;width:59px;height:21px;border:1px solid #cccccc;background:#e3e3e3;box-shadow:inset 0 0 0 1px #fff"></div><div class="ui" style="left:1245px;top:1038.5px;color:#8a8a8a;">0</div><div class="ui" style="left:1302px;top:1038px;color:#000;">%</div><div class="ui" style="left:1342px;top:1038px;color:#000;">Emission number Epsilon</div><div class="box" style="left:1468px;top:1035px;width:59px;height:21px;border:1px solid #cccccc;background:#e3e3e3;box-shadow:inset 0 0 0 1px #fff"></div><div class="ui" style="left:1474px;top:1038.5px;color:#8a8a8a;">0</div><div class="box" style="left:1037px;top:1084px;width:531px;height:42px;border:1px solid #dcdcdc"></div><div class="box" style="left:1042px;top:1077px;width:41px;height:14px;background:#f0f0f0"></div><div class="ui" style="left:1045px;top:1077px;color:#000;">Display</div><div class="ui" style="left:1048px;top:1099px;color:#000;">Color</div><div class="box" style="left:1090px;top:1094px;width:74px;height:23px;border:1px solid #7eb4ea;background:#fff"></div><div class="box" style="left:1092px;top:1096px;width:52px;height:19px;background:#003c00;border:1px solid #7a7a7a"></div><div class="box" style="left:1148px;top:1096px;width:14px;height:19px;background:#e1e1e1;border:1px solid #adadad"></div><svg class="box" style="left:1150px;top:1102px" width="11" height="7"><path d="M0.5 1L5.5 6L10.5 1" fill="none" stroke="#333" stroke-width="1.1"/></svg><div class="ui" style="left:1192px;top:1099px;color:#000;">Pen width</div><div class="box" style="left:1251px;top:1094px;width:60px;height:23px;border:1px solid #7a7a7a;background:#fff"></div><div class="ui" style="left:1257px;top:1097.5px;color:#000;">0.5</div><div class="ui" style="left:1321px;top:1099px;color:#000;">mm</div><div class="box" style="left:1410px;top:1135px;width:72px;height:22px;border:1px solid #adadad;background:#e1e1e1"></div><div class="ui" style="left:1410.0px;top:1139.0px;width:72px;text-align:center;color:#000;">OK</div><div class="box" style="left:1494px;top:1135px;width:72px;height:22px;border:1px solid #adadad;background:#e1e1e1"></div><div class="ui" style="left:1494.0px;top:1139.0px;width:72px;text-align:center;color:#000;">Cancel</div><div class="dlg" style="left:1365px;top:786px;width:424px;height:203px"></div><div class="box" style="left:1366px;top:787px;width:422px;height:30px;background:#7a7574"></div><div class="ttl" style="left:1374px;top:793px;color:#fff">Standard pipe dimensions</div><svg class="box" style="left:1767px;top:794px" width="12" height="12"><path d="M1 1L11 11M11 1L1 11" stroke="#fff" stroke-width="1"/></svg><div class="ui" style="left:1379px;top:832px;color:#000;">Standard:</div><div class="box" style="left:1467px;top:827px;width:173px;height:21px;border:1px solid #adadad;background:#e1e1e1"></div><div class="ui" style="left:1471px;top:830.5px;color:#000;">ANSI B36.19</div><svg class="box" style="left:1622px;top:833.5px" width="11" height="7"><path d="M0.5 1L5.5 6L10.5 1" fill="none" stroke="#333" stroke-width="1.1"/></svg><div class="ui" style="left:1379px;top:865px;color:#000;">Nom. diameter:</div><div class="box" style="left:1467px;top:859px;width:84px;height:21px;border:1px solid #adadad;background:#e1e1e1"></div><div class="ui" style="left:1471px;top:862.5px;color:#000;">NPS8</div><svg class="box" style="left:1533px;top:865.5px" width="11" height="7"><path d="M0.5 1L5.5 6L10.5 1" fill="none" stroke="#333" stroke-width="1.1"/></svg><div class="ui" style="left:1577px;top:863px;color:#000;">Outer diameter</div><div class="box" style="left:1660px;top:858px;width:63px;height:21px;border:1px solid #adadad;background:#e1e1e1"></div><div class="ui" style="left:1664px;top:861.5px;color:#000;">219.07</div><svg class="box" style="left:1705px;top:864.5px" width="11" height="7"><path d="M0.5 1L5.5 6L10.5 1" fill="none" stroke="#333" stroke-width="1.1"/></svg><div class="ui" style="left:1731px;top:863px;color:#000;">mm</div><div class="box" style="left:1389.5px;top:903.5px;width:13px;height:13px;border-radius:50%;border:1px solid #333;background:#fff"></div><div class="ui" style="left:1405px;top:903px;color:#000;">Select wall thickness</div><div class="box" style="left:1521px;top:900px;width:77px;height:21px;border:1px solid #cccccc;background:#cccccc"></div><div class="ui" style="left:1525px;top:903.5px;color:#838383;">8.18</div><svg class="box" style="left:1580px;top:906.5px" width="11" height="7"><path d="M0.5 1L5.5 6L10.5 1" fill="none" stroke="#bfbfbf" stroke-width="1.1"/></svg><div class="ui" style="left:1606px;top:905px;color:#000;">mm</div><div class="box" style="left:1389.5px;top:933.0px;width:13px;height:13px;border-radius:50%;border:1px solid #333;background:#fff"></div><div class="box" style="left:1393px;top:936.5px;width:6px;height:6px;border-radius:50%;background:#333"></div><div class="ui" style="left:1405px;top:932px;color:#000;">Select schedule</div><div class="box" style="left:1521px;top:928px;width:77px;height:21px;border:1px solid #adadad;background:#e1e1e1"></div><div class="ui" style="left:1525px;top:931.5px;color:#000;">STD</div><svg class="box" style="left:1580px;top:934.5px" width="11" height="7"><path d="M0.5 1L5.5 6L10.5 1" fill="none" stroke="#333" stroke-width="1.1"/></svg><div class="ui" style="left:1614px;top:932px;color:#000;">Wall thickness</div><div class="box" style="left:1687px;top:928px;width:60px;height:23px;border:1px solid #7a7a7a;background:#e6e6e6"></div><div class="ui" style="left:1693px;top:931.5px;color:#000;">8.18</div><div class="ui" style="left:1752px;top:932px;color:#000;">mm</div><div class="box" style="left:1624px;top:959px;width:73px;height:22px;border:2px solid #0078d7;background:#e1e1e1"></div><div class="ui" style="left:1624.0px;top:963.0px;width:73px;text-align:center;color:#000;">OK</div><div class="box" style="left:1705px;top:959px;width:73px;height:22px;border:1px solid #adadad;background:#e1e1e1"></div><div class="ui" style="left:1705.0px;top:963.0px;width:73px;text-align:center;color:#000;">Cancel</div></body></html>
